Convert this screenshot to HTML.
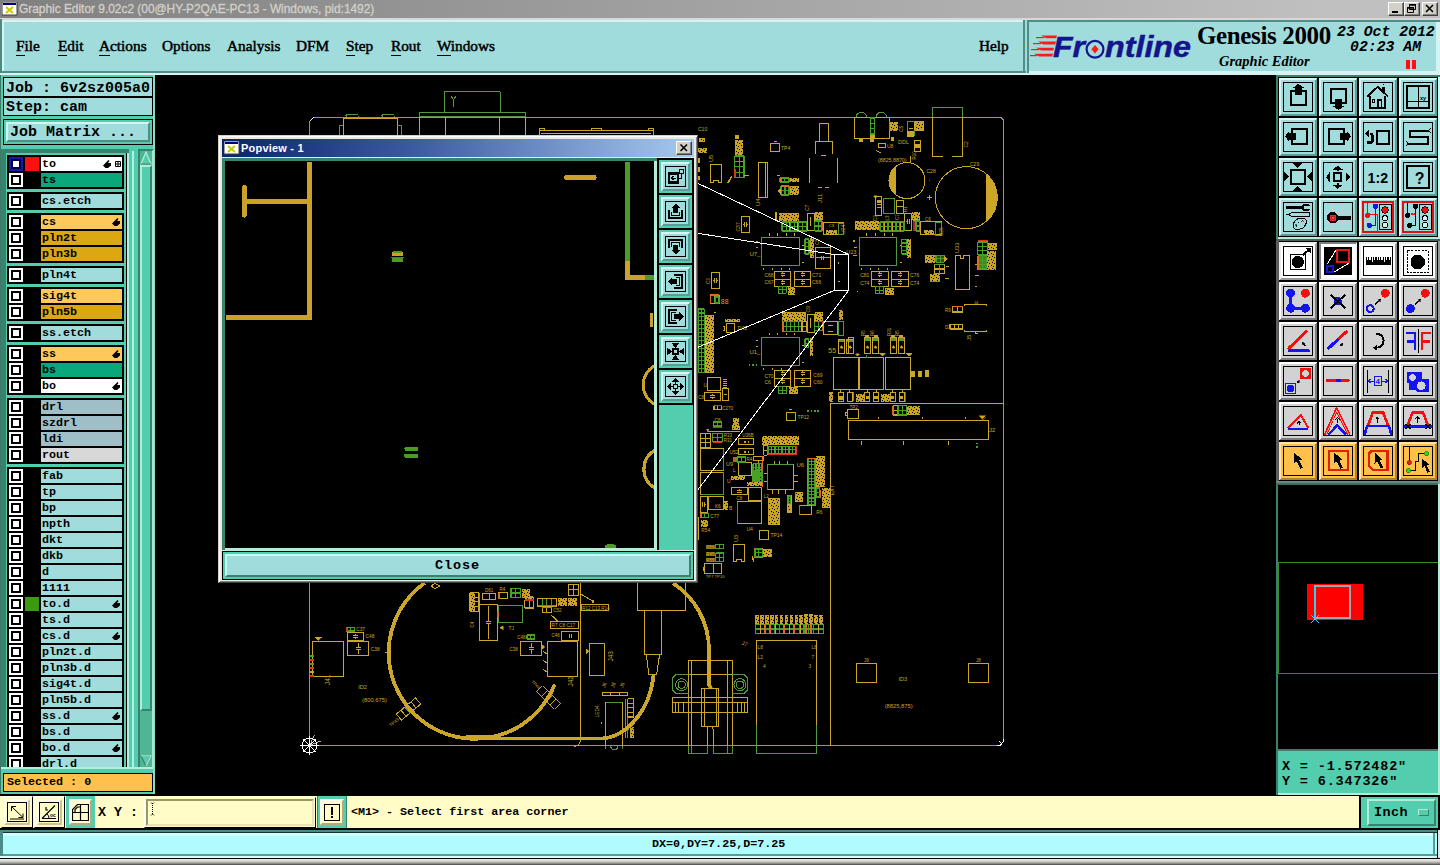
<!DOCTYPE html><html><head><meta charset="utf-8"><title>Graphic Editor</title><style>
*{margin:0;padding:0;box-sizing:border-box}
html,body{width:1440px;height:865px;overflow:hidden;background:#000}
body{position:relative;font-family:"Liberation Mono",monospace;color:#000}
.a{position:absolute}
.mono{font-family:"Liberation Mono",monospace;font-weight:bold;white-space:pre}
.serif{font-family:"Liberation Serif",serif}
.sans{font-family:"Liberation Sans",sans-serif}
#title{left:0;top:0;width:1440px;height:18px;background:linear-gradient(90deg,#808080 0%,#c0c0c0 92%,#c0c0c0 100%)}
#title .t{left:19px;top:2px;font:11.9px "Liberation Sans",sans-serif;color:#d4d0c8;white-space:pre;-webkit-text-stroke:0.3px #d4d0c8}
.wb{position:absolute;top:2px;width:16px;height:14px;background:#d4d0c8;border:1px solid;border-color:#fff #404040 #404040 #fff;box-shadow:inset -1px -1px 0 #808080}
#menu{left:0;top:18px;width:1027px;height:57px;background:#a0dcdc}
.mi{position:absolute;top:37px;font:15.3px "Liberation Serif",serif;-webkit-text-stroke:0.5px #000;white-space:pre}
.mi u{text-decoration:none;border-bottom:1.5px solid #000;padding-bottom:1px}
.lay{position:absolute;left:41px;width:81px;height:14px;font:bold 11.7px/14px "Liberation Mono",monospace;padding-left:1px;white-space:pre;overflow:hidden}
.cb{position:absolute;left:9px;width:14px;height:14px;background:#fff}
.cb:before{content:"";position:absolute;left:2px;top:2px;width:6px;height:6px;border:2px solid #000;background:#fff}
.cb.bl{background:#1818a8}.cb.bl:before{border-color:#000050}
.grp{position:absolute;left:7px;width:117px;background:#000}
</style></head><body><div id="title" class="a"><svg class="a" style="left:2px;top:2px" width="16" height="14" viewBox="0 0 16 14"><rect x="0" y="0" width="15" height="13" fill="#fff" stroke="#404040" stroke-width="1"/><rect x="1" y="1" width="13" height="2" fill="#000080"/><path d="M4 5 L11 11 M11 5 L4 11" stroke="#c8c800" stroke-width="2"/></svg><div class="a t">Graphic Editor 9.02c2 (00@HY-P2QAE-PC13 - Windows, pid:1492)</div><div class="wb" style="left:1388px"><svg width="14" height="12" style="position:absolute;left:0;top:0"><rect x="3" y="8" width="6" height="2" fill="#000"/></svg></div><div class="wb" style="left:1404px"><svg width="14" height="12" style="position:absolute;left:0;top:0"><path d="M4.5 1.5h6v5h-6z M2.5 4.5h6v5h-6z" fill="#d4d0c8" stroke="#000"/><path d="M4 2h7M2 5h7" stroke="#000" stroke-width="1.6"/></svg></div><div class="wb" style="left:1422px"><svg width="14" height="12" style="position:absolute;left:0;top:0"><path d="M3 2l7 7M10 2l-7 7" stroke="#000" stroke-width="1.6"/></svg></div></div><div id="menu" class="a"><div class="a" style="left:0;top:0;width:1027px;height:2px;background:#d8d8d8"></div><div class="a" style="left:0;top:1px;width:2px;height:56px;background:#4a8a80"></div><div class="a" style="left:2px;top:2px;width:1023px;height:2px;background:#d4f4f4"></div><div class="a" style="left:2px;top:2px;width:2px;height:53px;background:#d4f4f4"></div><div class="a" style="left:2px;top:53px;width:1024px;height:2px;background:#4f8f88"></div><div class="a" style="left:1023px;top:2px;width:2px;height:53px;background:#4f8f88"></div><div class="a" style="left:0;top:55px;width:1027px;height:2px;background:#d4f4f4"></div></div><div class="mi" style="left:16px"><u>F</u>ile</div><div class="mi" style="left:58px"><u>E</u>dit</div><div class="mi" style="left:99px"><u>A</u>ctions</div><div class="mi" style="left:162px">Options</div><div class="mi" style="left:227px">Analysis</div><div class="mi" style="left:296px">DFM</div><div class="mi" style="left:346px"><u>S</u>tep</div><div class="mi" style="left:391px"><u>R</u>out</div><div class="mi" style="left:437px"><u>W</u>indows</div><div class="mi" style="left:979px">Help</div><div class="a" style="left:1027px;top:18px;width:413px;height:57px;background:#a0dcdc"><div class="a" style="left:0;top:0;width:413px;height:2px;background:#d8d8d8"></div><div class="a" style="left:0;top:2px;width:413px;height:2px;background:#4f8f88"></div><div class="a" style="left:0;top:2px;width:2px;height:53px;background:#4f8f88"></div><div class="a" style="left:409px;top:4px;width:4px;height:51px;background:#d4f4f4"></div><div class="a" style="left:2px;top:53px;width:409px;height:2px;background:#d4f4f4"></div><div class="a" style="left:0;top:55px;width:413px;height:2px;background:#d4f4f4"></div></div><svg class="a" style="left:1030px;top:26px" width="165" height="40" viewBox="1030 26 165 40"><g fill="#ff1a1a"><path d="M1041 35.500h16l-0.800 2.800h-10z"/><path d="M1038 41.600h18l-0.800 2.800h-12z"/><path d="M1036 47.700h18l-0.800 2.800h-12z"/><path d="M1034 53.800h19l-0.800 2.800h-13z"/><rect x="1036" y="37" width="8" height="1.2"/><rect x="1033" y="43" width="8" height="1.2"/><rect x="1031" y="49" width="8" height="1.2"/><rect x="1030" y="55" width="7" height="1.2"/></g><text x="1053" y="56.5" font-family="Liberation Sans, sans-serif" font-weight="bold" font-style="italic" font-size="30" fill="#14148c" stroke="#14148c" stroke-width="0.500" textLength="32" lengthAdjust="spacingAndGlyphs">Fr</text><circle cx="1095" cy="49.300" r="8.400" fill="none" stroke="#14148c" stroke-width="2.200"/><path d="M1095 45l3.600 4.300l-3.600 4.300l-3.600 -4.300z" fill="#ff1a1a"/><text x="1105" y="56.500" font-family="Liberation Sans, sans-serif" font-weight="bold" font-style="italic" font-size="30" fill="#14148c" stroke="#14148c" stroke-width="0.500" textLength="86" lengthAdjust="spacingAndGlyphs">ntline</text></svg><div class="a serif" style="left:1197px;top:22px;font-weight:bold;font-size:25px;line-height:28px;white-space:pre;letter-spacing:-0.360px" id="gen2000">Genesis 2000</div><div class="a serif" style="left:1219px;top:53px;font-weight:bold;font-style:italic;font-size:14.500px;line-height:17px;white-space:pre" id="ged">Graphic Editor</div><div class="a mono" style="left:1337px;top:23.500px;font-style:italic;font-size:14.800px;line-height:17px" id="date1">23 Oct 2012</div><div class="a mono" style="left:1350px;top:38.500px;font-style:italic;font-size:14.800px;line-height:17px" id="date2">02:23 AM</div><div class="a" style="left:1406px;top:60px;width:4px;height:9px;background:#ff1010"></div><div class="a" style="left:1412px;top:60px;width:4px;height:9px;background:#ff1010"></div><div class="a" style="left:0;top:75px;width:155px;height:719px;background:#52ceae"></div><div class="a" style="left:153px;top:75px;width:2px;height:719px;background:#8adcc6"></div><div class="a" style="left:0;top:75px;width:1px;height:719px;background:#3c7a68"></div><div class="a mono" style="left:3px;top:77px;width:150px;height:20px;background:#a0dcdc;border:1px solid #000;font-size:15px;line-height:21px;padding-left:2px;overflow:hidden" id="job">Job : 6v2sz005a0</div><div class="a mono" style="left:3px;top:97px;width:150px;height:19px;background:#a0dcdc;border:1px solid #000;font-size:15px;line-height:19px;padding-left:2px;overflow:hidden">Step: cam</div><div class="a" style="left:3px;top:119px;width:150px;height:26px;border:1px solid #000;background:#52ceae"></div><div class="a mono" style="left:6px;top:122px;width:144px;height:20px;background:#a0dcdc;border:2px solid;border-color:#d4f4f4 #4f8f88 #4f8f88 #d4f4f4;font-size:15px;line-height:18px;padding-left:2px;overflow:hidden">Job Matrix ...</div><div class="a" style="left:1px;top:149px;width:133px;height:618px;overflow:hidden;background:#52ceae"><div class="a" style="left:0;top:0;width:5px;height:619px;background:#3a8270"></div><div class="a" style="left:0;top:0;width:128px;height:4px;background:#3a8270"></div><div class="a" style="left:125px;top:4px;width:1px;height:615px;background:#000"></div><div class="a" style="left:126px;top:4px;width:2px;height:615px;background:#b0f0e0"></div><div class="a" style="left:131px;top:2px;width:2px;height:617px;background:#b0f0e0"></div><div class="grp" style="left:6px;top:6px;height:34px"><div class="cb bl" style="left:2px;top:2px"></div><div class="a" style="left:18px;top:2px;width:14px;height:14px;background:#ff1010"></div><div class="lay" style="left:34px;top:2px;background:#ffffff">to<svg style="position:absolute;right:11px;top:3px" width="8" height="8" viewBox="0 0 8 8"><path d="M0 5.500L3 2.500L5.500 0L6.500 1L5 3H8V5.500L5 8H2.500z" fill="#000"/></svg><svg style="position:absolute;right:1px;top:4px" width="6" height="6" viewBox="0 0 6 6"><path d="M0.500 0.500h5v5h-5zM3 0v6M0 3h6" fill="#fff" stroke="#000" stroke-width="1"/></svg></div><div class="cb" style="left:2px;top:18px"></div><div class="lay" style="left:34px;top:18px;background:#0aa67c">ts</div></div><div class="grp" style="left:6px;top:43px;height:18px"><div class="cb" style="left:2px;top:2px"></div><div class="lay" style="left:34px;top:2px;background:#a0dcdc">cs.etch</div></div><div class="grp" style="left:6px;top:64px;height:50px"><div class="cb" style="left:2px;top:2px"></div><div class="lay" style="left:34px;top:2px;background:#ffc85a">cs<svg style="position:absolute;right:2px;top:3px" width="8" height="8" viewBox="0 0 8 8"><path d="M0 5.500L3 2.500L5.500 0L6.500 1L5 3H8V5.500L5 8H2.500z" fill="#000"/></svg></div><div class="cb" style="left:2px;top:18px"></div><div class="lay" style="left:34px;top:18px;background:#dba712">pln2t</div><div class="cb" style="left:2px;top:34px"></div><div class="lay" style="left:34px;top:34px;background:#dba712">pln3b</div></div><div class="grp" style="left:6px;top:117px;height:18px"><div class="cb" style="left:2px;top:2px"></div><div class="lay" style="left:34px;top:2px;background:#a0dcdc">pln4t</div></div><div class="grp" style="left:6px;top:138px;height:34px"><div class="cb" style="left:2px;top:2px"></div><div class="lay" style="left:34px;top:2px;background:#ffc85a">sig4t</div><div class="cb" style="left:2px;top:18px"></div><div class="lay" style="left:34px;top:18px;background:#dba712">pln5b</div></div><div class="grp" style="left:6px;top:175px;height:18px"><div class="cb" style="left:2px;top:2px"></div><div class="lay" style="left:34px;top:2px;background:#a0dcdc">ss.etch</div></div><div class="grp" style="left:6px;top:196px;height:50px"><div class="cb" style="left:2px;top:2px"></div><div class="lay" style="left:34px;top:2px;background:#ffc85a">ss<svg style="position:absolute;right:2px;top:3px" width="8" height="8" viewBox="0 0 8 8"><path d="M0 5.500L3 2.500L5.500 0L6.500 1L5 3H8V5.500L5 8H2.500z" fill="#000"/></svg></div><div class="cb" style="left:2px;top:18px"></div><div class="lay" style="left:34px;top:18px;background:#0aa67c">bs</div><div class="cb" style="left:2px;top:34px"></div><div class="lay" style="left:34px;top:34px;background:#ffffff">bo<svg style="position:absolute;right:2px;top:3px" width="8" height="8" viewBox="0 0 8 8"><path d="M0 5.500L3 2.500L5.500 0L6.500 1L5 3H8V5.500L5 8H2.500z" fill="#000"/></svg></div></div><div class="grp" style="left:6px;top:249px;height:66px"><div class="cb" style="left:2px;top:2px"></div><div class="lay" style="left:34px;top:2px;background:#9fbec8">drl</div><div class="cb" style="left:2px;top:18px"></div><div class="lay" style="left:34px;top:18px;background:#9fbec8">szdrl</div><div class="cb" style="left:2px;top:34px"></div><div class="lay" style="left:34px;top:34px;background:#9fbec8">ldi</div><div class="cb" style="left:2px;top:50px"></div><div class="lay" style="left:34px;top:50px;background:#d8d8d8">rout</div></div><div class="grp" style="left:6px;top:318px;height:322px"><div class="cb" style="left:2px;top:2px"></div><div class="lay" style="left:34px;top:2px;background:#a0dcdc">fab</div><div class="cb" style="left:2px;top:18px"></div><div class="lay" style="left:34px;top:18px;background:#a0dcdc">tp</div><div class="cb" style="left:2px;top:34px"></div><div class="lay" style="left:34px;top:34px;background:#a0dcdc">bp</div><div class="cb" style="left:2px;top:50px"></div><div class="lay" style="left:34px;top:50px;background:#a0dcdc">npth</div><div class="cb" style="left:2px;top:66px"></div><div class="lay" style="left:34px;top:66px;background:#a0dcdc">dkt</div><div class="cb" style="left:2px;top:82px"></div><div class="lay" style="left:34px;top:82px;background:#a0dcdc">dkb</div><div class="cb" style="left:2px;top:98px"></div><div class="lay" style="left:34px;top:98px;background:#a0dcdc">d</div><div class="cb" style="left:2px;top:114px"></div><div class="lay" style="left:34px;top:114px;background:#a0dcdc">1111</div><div class="cb" style="left:2px;top:130px"></div><div class="a" style="left:18px;top:130px;width:14px;height:14px;background:#3c9a10"></div><div class="lay" style="left:34px;top:130px;background:#a0dcdc">to.d<svg style="position:absolute;right:2px;top:3px" width="8" height="8" viewBox="0 0 8 8"><path d="M0 5.500L3 2.500L5.500 0L6.500 1L5 3H8V5.500L5 8H2.500z" fill="#000"/></svg></div><div class="cb" style="left:2px;top:146px"></div><div class="lay" style="left:34px;top:146px;background:#a0dcdc">ts.d</div><div class="cb" style="left:2px;top:162px"></div><div class="lay" style="left:34px;top:162px;background:#a0dcdc">cs.d<svg style="position:absolute;right:2px;top:3px" width="8" height="8" viewBox="0 0 8 8"><path d="M0 5.500L3 2.500L5.500 0L6.500 1L5 3H8V5.500L5 8H2.500z" fill="#000"/></svg></div><div class="cb" style="left:2px;top:178px"></div><div class="lay" style="left:34px;top:178px;background:#a0dcdc">pln2t.d</div><div class="cb" style="left:2px;top:194px"></div><div class="lay" style="left:34px;top:194px;background:#a0dcdc">pln3b.d</div><div class="cb" style="left:2px;top:210px"></div><div class="lay" style="left:34px;top:210px;background:#a0dcdc">sig4t.d</div><div class="cb" style="left:2px;top:226px"></div><div class="lay" style="left:34px;top:226px;background:#a0dcdc">pln5b.d</div><div class="cb" style="left:2px;top:242px"></div><div class="lay" style="left:34px;top:242px;background:#a0dcdc">ss.d<svg style="position:absolute;right:2px;top:3px" width="8" height="8" viewBox="0 0 8 8"><path d="M0 5.500L3 2.500L5.500 0L6.500 1L5 3H8V5.500L5 8H2.500z" fill="#000"/></svg></div><div class="cb" style="left:2px;top:258px"></div><div class="lay" style="left:34px;top:258px;background:#a0dcdc">bs.d</div><div class="cb" style="left:2px;top:274px"></div><div class="lay" style="left:34px;top:274px;background:#a0dcdc">bo.d<svg style="position:absolute;right:2px;top:3px" width="8" height="8" viewBox="0 0 8 8"><path d="M0 5.500L3 2.500L5.500 0L6.500 1L5 3H8V5.500L5 8H2.500z" fill="#000"/></svg></div><div class="cb" style="left:2px;top:290px"></div><div class="lay" style="left:34px;top:290px;background:#a0dcdc">drl.d</div><div class="cb" style="left:2px;top:306px"></div><div class="lay" style="left:34px;top:306px;background:#a0dcdc">x</div></div></div><div class="a" style="left:138px;top:149px;width:16px;height:619px;background:#4fb595;border-left:2px solid #3a8270;border-top:2px solid #3a8270;border-right:2px solid #a8e6d2"></div><svg class="a" style="left:140px;top:151px" width="12" height="14" viewBox="0 0 12 14"><path d="M6 1L11 13H1z" fill="#52ceae" stroke="#b4ecd8" stroke-width="1.200"/><path d="M1 13H11" stroke="#3a8270" stroke-width="1.200"/></svg><div class="a" style="left:140px;top:165px;width:12px;height:546px;background:#52ceae;border:2px solid;border-color:#b4ecd8 #3a8270 #3a8270 #b4ecd8"></div><svg class="a" style="left:140px;top:755px" width="12" height="12" viewBox="0 0 12 14" preserveAspectRatio="none"><path d="M6 13L11 1H1z" fill="#52ceae" stroke="#3a8270" stroke-width="1.200"/><path d="M1 1H11L6 13" stroke="#b4ecd8" stroke-width="1.200" fill="none"/></svg><div class="a" style="left:1px;top:767px;width:152px;height:2px;background:#b0f0e0"></div><div class="a mono" style="left:3px;top:773px;width:150px;height:19px;background:#ffc04c;border:1px solid #000;font-size:11.700px;line-height:17px;padding-left:3px">Selected : 0</div><div class="a" style="left:1276px;top:75px;width:164px;height:722px;background:#52ceae"></div><div class="a" style="left:1276px;top:75px;width:164px;height:2px;background:#3a8270"></div><div class="a" style="left:1276px;top:75px;width:2px;height:722px;background:#3a8270"></div><div class="a" style="left:1278px;top:77px;width:160px;height:160px;background:#000"></div><div class="a" style="left:1438px;top:77px;width:2px;height:162px;background:#c8f8f0"></div><div class="a" style="left:1278px;top:237px;width:162px;height:2px;background:#b4ecd8"></div><div class="a" style="left:1276px;top:239px;width:164px;height:2px;background:#4c5c58"></div><div class="a" style="left:1276px;top:241px;width:2px;height:240px;background:#606060"></div><div class="a" style="left:1278px;top:241px;width:160px;height:240px;background:#000"></div><div class="a" style="left:1278px;top:241px;width:1px;height:240px;background:#555"></div><div class="a" style="left:1276px;top:481px;width:164px;height:2px;background:#708884"></div><div class="a" style="left:1276px;top:483px;width:164px;height:2px;background:#3c6c60"></div><div class="a" style="left:1438px;top:241px;width:2px;height:243px;background:#8c9c98"></div><svg class="a" style="left:1279px;top:78px" width="38" height="38" viewBox="0 0 38 38" shape-rendering="crispEdges"><rect width="38" height="38" fill="#a0dcdc"/><path d="M0 0H38L36 2H2V36L0 38z" fill="#d8f6f6"/><path d="M38 38H0L2 36H36V2L38 0z" fill="#5c9c98"/><rect x="4.500" y="4.500" width="29" height="29" fill="none" stroke="#000" stroke-width="1"/><svg x="5" y="5" width="28" height="28" viewBox="0 0 28 28" overflow="hidden"><rect x="7" y="8.4" width="15" height="13.4" fill="none" stroke="#000" stroke-width="2"/><path d="M14.500 0.800L20.200 4.800H17.800V11.600H11.200V4.800H8.800z" fill="#000"/></svg></svg><svg class="a" style="left:1319px;top:78px" width="38" height="38" viewBox="0 0 38 38" shape-rendering="crispEdges"><rect width="38" height="38" fill="#a0dcdc"/><path d="M0 0H38L36 2H2V36L0 38z" fill="#d8f6f6"/><path d="M38 38H0L2 36H36V2L38 0z" fill="#5c9c98"/><rect x="4.500" y="4.500" width="29" height="29" fill="none" stroke="#000" stroke-width="1"/><svg x="5" y="5" width="28" height="28" viewBox="0 0 28 28" overflow="hidden"><rect x="7" y="6.200" width="15" height="13.800" fill="none" stroke="#000" stroke-width="2"/><path d="M14.500 27.200L20.200 23.200H17.800V16H11.200V23.200H8.800z" fill="#000"/></svg></svg><svg class="a" style="left:1359px;top:78px" width="38" height="38" viewBox="0 0 38 38" shape-rendering="crispEdges"><rect width="38" height="38" fill="#a0dcdc"/><path d="M0 0H38L36 2H2V36L0 38z" fill="#d8f6f6"/><path d="M38 38H0L2 36H36V2L38 0z" fill="#5c9c98"/><rect x="4.500" y="4.500" width="29" height="29" fill="none" stroke="#000" stroke-width="1"/><svg x="5" y="5" width="28" height="28" viewBox="0 0 28 28" overflow="hidden"><path d="M3.400 13.600L13.600 3.600L23.800 13.600" fill="none" stroke="#000" stroke-width="1.600"/><path d="M6.100 13.400V24.600H21V13.400" fill="none" stroke="#000" stroke-width="2"/><rect x="18.300" y="3.700" width="2.400" height="6.500" fill="#000"/><rect x="19.300" y="1.200" width="1" height="1.200" fill="#000"/><rect x="8.600" y="16.800" width="2.200" height="2.200" fill="none" stroke="#000" stroke-width="1"/><path d="M14 24.600V17H17.400V24.600" fill="none" stroke="#000" stroke-width="1.200"/></svg></svg><svg class="a" style="left:1399px;top:78px" width="38" height="38" viewBox="0 0 38 38" shape-rendering="crispEdges"><rect width="38" height="38" fill="#a0dcdc"/><path d="M0 0H38L36 2H2V36L0 38z" fill="#d8f6f6"/><path d="M38 38H0L2 36H36V2L38 0z" fill="#5c9c98"/><rect x="4.500" y="4.500" width="29" height="29" fill="none" stroke="#000" stroke-width="1"/><svg x="5" y="5" width="28" height="28" viewBox="0 0 28 28" overflow="hidden"><rect x="3.200" y="3.400" width="21.800" height="21.200" fill="none" stroke="#000" stroke-width="2"/><path d="M14.200 3.400V24.600M3.200 18.300H25" stroke="#000" stroke-width="1.400"/><text x="16" y="16.800" font-family="Liberation Sans,sans-serif" font-size="5.500" font-weight="bold" fill="#000">xy</text></svg></svg><svg class="a" style="left:1279px;top:118px" width="38" height="38" viewBox="0 0 38 38" shape-rendering="crispEdges"><rect width="38" height="38" fill="#a0dcdc"/><path d="M0 0H38L36 2H2V36L0 38z" fill="#d8f6f6"/><path d="M38 38H0L2 36H36V2L38 0z" fill="#5c9c98"/><rect x="4.500" y="4.500" width="29" height="29" fill="none" stroke="#000" stroke-width="1"/><svg x="5" y="5" width="28" height="28" viewBox="0 0 28 28" overflow="hidden"><rect x="8.100" y="6.400" width="14.700" height="14.200" fill="none" stroke="#000" stroke-width="2"/><path d="M1 13.400L5 7.900V10H12V16.800H5V18.900z" fill="#000"/></svg></svg><svg class="a" style="left:1319px;top:118px" width="38" height="38" viewBox="0 0 38 38" shape-rendering="crispEdges"><rect width="38" height="38" fill="#a0dcdc"/><path d="M0 0H38L36 2H2V36L0 38z" fill="#d8f6f6"/><path d="M38 38H0L2 36H36V2L38 0z" fill="#5c9c98"/><rect x="4.500" y="4.500" width="29" height="29" fill="none" stroke="#000" stroke-width="1"/><svg x="5" y="5" width="28" height="28" viewBox="0 0 28 28" overflow="hidden"><rect x="5.200" y="6.400" width="14.700" height="14.200" fill="none" stroke="#000" stroke-width="2"/><path d="M27 13.400L23 7.900V10H16V16.800H23V18.900z" fill="#000"/></svg></svg><svg class="a" style="left:1359px;top:118px" width="38" height="38" viewBox="0 0 38 38" shape-rendering="crispEdges"><rect width="38" height="38" fill="#a0dcdc"/><path d="M0 0H38L36 2H2V36L0 38z" fill="#d8f6f6"/><path d="M38 38H0L2 36H36V2L38 0z" fill="#5c9c98"/><rect x="4.500" y="4.500" width="29" height="29" fill="none" stroke="#000" stroke-width="1"/><svg x="5" y="5" width="28" height="28" viewBox="0 0 28 28" overflow="hidden"><rect x="13.400" y="8.200" width="11.800" height="12.600" fill="none" stroke="#000" stroke-width="2"/><path d="M3.400 19.600H6.500Q8.600 19.600 8.600 17V13.500Q8.600 10.800 5.500 10.800" fill="none" stroke="#000" stroke-width="2.400"/><path d="M1 10.800L5 7V14.600z" fill="#000"/></svg></svg><svg class="a" style="left:1399px;top:118px" width="38" height="38" viewBox="0 0 38 38" shape-rendering="crispEdges"><rect width="38" height="38" fill="#a0dcdc"/><path d="M0 0H38L36 2H2V36L0 38z" fill="#d8f6f6"/><path d="M38 38H0L2 36H36V2L38 0z" fill="#5c9c98"/><rect x="4.500" y="4.500" width="29" height="29" fill="none" stroke="#000" stroke-width="1"/><svg x="5" y="5" width="28" height="28" viewBox="0 0 28 28" overflow="hidden"><path d="M24.500 7.700H5.700V14.100H23.600V20.600H4.200" fill="none" stroke="#000" stroke-width="2"/><path d="M27 4.700L24.500 7.700L27 9.800M2.200 18L4.200 20.600L2.200 23" fill="none" stroke="#000" stroke-width="1"/></svg></svg><svg class="a" style="left:1279px;top:158px" width="38" height="38" viewBox="0 0 38 38" shape-rendering="crispEdges"><rect width="38" height="38" fill="#a0dcdc"/><path d="M0 0H38L36 2H2V36L0 38z" fill="#d8f6f6"/><path d="M38 38H0L2 36H36V2L38 0z" fill="#5c9c98"/><rect x="4.500" y="4.500" width="29" height="29" fill="none" stroke="#000" stroke-width="1"/><svg x="5" y="5" width="28" height="28" viewBox="0 0 28 28" overflow="hidden"><rect x="7.100" y="7.200" width="13.800" height="13.800" fill="none" stroke="#000" stroke-width="2"/><path d="M13.500 4.800L8 0H19zM13.500 23.200L8 28H19zM4.800 13.600L0 8.200V19zM23.400 13.600L28 8.200V19z" fill="#000"/></svg></svg><svg class="a" style="left:1319px;top:158px" width="38" height="38" viewBox="0 0 38 38" shape-rendering="crispEdges"><rect width="38" height="38" fill="#a0dcdc"/><path d="M0 0H38L36 2H2V36L0 38z" fill="#d8f6f6"/><path d="M38 38H0L2 36H36V2L38 0z" fill="#5c9c98"/><rect x="4.500" y="4.500" width="29" height="29" fill="none" stroke="#000" stroke-width="1"/><svg x="5" y="5" width="28" height="28" viewBox="0 0 28 28" overflow="hidden"><rect x="10" y="10.400" width="7.400" height="7.400" fill="none" stroke="#000" stroke-width="2"/><path d="M13.700 2.800L19 6.800H8.400zM13.700 25.800L19 21.800H8.400zM2.200 14.100L5.800 9V19.400zM26 14.100L21.800 9V19.400z" fill="#000"/><path d="M12.500 6.800h2.400v1.400h-2.400zM12.500 20.400h2.400v1.400h-2.400z" fill="#000"/></svg></svg><svg class="a" style="left:1359px;top:158px" width="38" height="38" viewBox="0 0 38 38" shape-rendering="crispEdges"><rect width="38" height="38" fill="#a0dcdc"/><path d="M0 0H38L36 2H2V36L0 38z" fill="#d8f6f6"/><path d="M38 38H0L2 36H36V2L38 0z" fill="#5c9c98"/><rect x="4.500" y="4.500" width="29" height="29" fill="none" stroke="#000" stroke-width="1"/><svg x="5" y="5" width="28" height="28" viewBox="0 0 28 28" overflow="hidden"><text x="3.600" y="19.800" font-family="Liberation Sans,sans-serif" font-size="15.500" font-weight="bold" fill="#000" textLength="20.500" lengthAdjust="spacingAndGlyphs">1:2</text></svg></svg><svg class="a" style="left:1399px;top:158px" width="38" height="38" viewBox="0 0 38 38" shape-rendering="crispEdges"><rect width="38" height="38" fill="#a0dcdc"/><path d="M0 0H38L36 2H2V36L0 38z" fill="#d8f6f6"/><path d="M38 38H0L2 36H36V2L38 0z" fill="#5c9c98"/><rect x="4.500" y="4.500" width="29" height="29" fill="none" stroke="#000" stroke-width="1"/><svg x="5" y="5" width="28" height="28" viewBox="0 0 28 28" overflow="hidden"><rect x="3.200" y="3.400" width="21.800" height="21.200" fill="none" stroke="#000" stroke-width="2"/><text x="10.800" y="20.800" font-family="Liberation Sans,sans-serif" font-size="16" font-weight="bold" fill="#000">?</text></svg></svg><svg class="a" style="left:1279px;top:198px" width="38" height="38" viewBox="0 0 38 38" shape-rendering="crispEdges"><rect width="38" height="38" fill="#a0dcdc"/><path d="M0 0H38L36 2H2V36L0 38z" fill="#d8f6f6"/><path d="M38 38H0L2 36H36V2L38 0z" fill="#5c9c98"/><rect x="4.500" y="4.500" width="29" height="29" fill="none" stroke="#000" stroke-width="1"/><svg x="5" y="5" width="28" height="28" viewBox="0 0 28 28" overflow="hidden"><rect x="2.200" y="3.200" width="16" height="2.600" fill="#000"/><path d="M25.800 2.600L24.600 1.200H19.600L17.200 3V5.800L19.600 7.600H24.600L25.800 6.200V5.500H20.200V3.400H25.800z" fill="#000"/><path d="M2.200 11.500H4.500L7.500 9.600H25.700V13.400H7.500L4.500 11.500" fill="none" stroke="#000" stroke-width="1.100"/><path d="M13 16.200Q16 14.600 20 15.400Q23.200 16.600 22.400 19.600Q21.400 21.600 20.600 23.600Q19.200 25.800 16.400 25.600Q14.600 27.200 12 26.600Q9.200 25.400 9.400 21.400Q9.800 18 13 16.200z" fill="none" stroke="#000" stroke-width="1.100"/><rect x="13.900" y="18.800" width="1.400" height="1.400" fill="none" stroke="#000" stroke-width="0.600" transform="rotate(45 14.600 19.500)"/><rect x="17.900" y="17.700" width="1.400" height="1.400" fill="none" stroke="#000" stroke-width="0.600" transform="rotate(45 18.600 18.400)"/><path d="M11.600 21.400L12.800 22.200L12.400 23.600z" fill="#000" stroke="#000" stroke-width="0.500"/></svg></svg><svg class="a" style="left:1319px;top:198px" width="38" height="38" viewBox="0 0 38 38" shape-rendering="crispEdges"><rect width="38" height="38" fill="#a0dcdc"/><path d="M0 0H38L36 2H2V36L0 38z" fill="#d8f6f6"/><path d="M38 38H0L2 36H36V2L38 0z" fill="#5c9c98"/><rect x="4.500" y="4.500" width="29" height="29" fill="none" stroke="#000" stroke-width="1"/><svg x="5" y="5" width="28" height="28" viewBox="0 0 28 28" overflow="hidden"><path d="M8.300 0V28M18.500 0V28M0 9.600H28M0 19.500H28" stroke="#c4d0d8" stroke-width="1"/><path d="M6.600 9.400H11.200L14.400 12.600V13.100H26.900V16.600H14.400V17.200L11.200 20.400H6.600L3.400 17.200V12.600z" fill="#000"/><rect x="6" y="12" width="6.100" height="6.100" fill="#d83030"/><rect x="7.300" y="13.300" width="3.500" height="3.500" fill="#e85050" stroke="#a01818" stroke-width="0.800"/></svg></svg><svg class="a" style="left:1359px;top:198px" width="38" height="38" viewBox="0 0 38 38" shape-rendering="crispEdges"><rect width="38" height="38" fill="#a0dcdc"/><path d="M0 0H38L36 2H2V36L0 38z" fill="#d8f6f6"/><path d="M38 38H0L2 36H36V2L38 0z" fill="#5c9c98"/><rect x="4" y="4" width="30" height="30" fill="#a0dcdc" stroke="#e01010" stroke-width="2.400"/><svg x="5" y="5" width="28" height="28" viewBox="0 0 28 28" overflow="hidden"><path d="M3.400 0V12.600M3.400 11.600H13.400V28" stroke="#f01010" stroke-width="1" fill="none"/><circle cx="3.600" cy="12.400" r="2.600" fill="#f01010"/><path d="M11 3.200V22H5.400" stroke="#1414f0" stroke-width="1" fill="none"/><circle cx="11.400" cy="3.200" r="2.600" fill="#1414f0"/><circle cx="5.400" cy="22.400" r="2.600" fill="#1414f0"/><rect x="15.2" y="1.5" width="12" height="25" fill="#a0dcdc" stroke="#000" stroke-width="1"/><circle cx="21" cy="7" r="3.4" fill="#f01010" stroke="#000" stroke-width="0.8"/><circle cx="21" cy="15.2" r="2.6" fill="#d8f0f0" stroke="#000" stroke-width="1"/><circle cx="21" cy="22" r="2.6" fill="#d8f0f0" stroke="#000" stroke-width="1"/></svg></svg><svg class="a" style="left:1399px;top:198px" width="38" height="38" viewBox="0 0 38 38" shape-rendering="crispEdges"><rect width="38" height="38" fill="#a0dcdc"/><path d="M0 0H38L36 2H2V36L0 38z" fill="#d8f6f6"/><path d="M38 38H0L2 36H36V2L38 0z" fill="#5c9c98"/><rect x="4" y="4" width="30" height="30" fill="#a0dcdc" stroke="#e01010" stroke-width="2.400"/><svg x="5" y="5" width="28" height="28" viewBox="0 0 28 28" overflow="hidden"><path d="M3.700 0V12" stroke="#000" stroke-width="1" fill="none"/><circle cx="3.700" cy="12.400" r="2.600" fill="#000"/><path d="M11.400 3.200V22H5.700" stroke="#000" stroke-width="1" fill="none"/><circle cx="11.400" cy="3.200" r="2.600" fill="#000"/><circle cx="5.700" cy="22.400" r="2.600" fill="#000"/><path d="M6.500 11.800H10.800M7 9.600V12M8.600 9.600V12M10.200 9.600V12" stroke="#f01010" stroke-width="1"/><rect x="15.2" y="1.5" width="12" height="25" fill="#a0dcdc" stroke="#000" stroke-width="1"/><circle cx="21" cy="7" r="3.4" fill="#f01010" stroke="#000" stroke-width="0.8"/><circle cx="21" cy="15.2" r="2.6" fill="#d8f0f0" stroke="#000" stroke-width="1"/><circle cx="21" cy="22" r="2.6" fill="#d8f0f0" stroke="#000" stroke-width="1"/></svg></svg><svg class="a" style="left:1279px;top:242px" width="38" height="38" viewBox="0 0 38 38" shape-rendering="crispEdges"><rect width="38" height="38" fill="#ffffff"/><path d="M0 0H38L36 2H2V36L0 38z" fill="#ececec"/><path d="M38 38H0L2 36H36V2L38 0z" fill="#9a9a9a"/><rect x="4.500" y="4.500" width="29" height="29" fill="none" stroke="#000" stroke-width="1"/><svg x="5" y="5" width="28" height="28" viewBox="0 0 28 28" overflow="hidden"><rect x="6.600" y="7.600" width="15" height="15" fill="none" stroke="#000" stroke-width="1"/><circle cx="13.900" cy="15" r="6" fill="#000"/><path d="M18.800 8L25 2.800" stroke="#000" stroke-width="2"/><path d="M21.500 1H27.400V6.500z" fill="#000"/></svg></svg><svg class="a" style="left:1319px;top:242px" width="38" height="38" viewBox="0 0 38 38" shape-rendering="crispEdges"><rect width="38" height="38" fill="#ffffff"/><path d="M0 0H38L36 2H2V36L0 38z" fill="#808080"/><path d="M38 38H0L2 36H36V2L38 0z" fill="#f4f4f4"/><rect x="5" y="5" width="28" height="28" fill="#000"/><svg x="5" y="5" width="28" height="28" viewBox="0 0 28 28" overflow="hidden"><path d="M3.200 17.200L11.800 3.200M10 25.200L24.900 16.100" stroke="#fff" stroke-width="1"/><rect x="12.800" y="3.100" width="12" height="12" fill="#000" stroke="#e81818" stroke-width="2"/><rect x="3.100" y="19" width="6" height="6" fill="#000" stroke="#1818d8" stroke-width="2"/></svg></svg><svg class="a" style="left:1359px;top:242px" width="38" height="38" viewBox="0 0 38 38" shape-rendering="crispEdges"><rect width="38" height="38" fill="#ffffff"/><path d="M0 0H38L36 2H2V36L0 38z" fill="#ececec"/><path d="M38 38H0L2 36H36V2L38 0z" fill="#9a9a9a"/><rect x="4.500" y="4.500" width="29" height="29" fill="none" stroke="#000" stroke-width="1"/><svg x="5" y="5" width="28" height="28" viewBox="0 0 28 28" overflow="hidden"><rect x="2" y="9.600" width="24.800" height="8.200" fill="#000"/><rect x="2.90" y="9.500" width="1.200" height="3.4" fill="#fff"/><rect x="5.32" y="9.500" width="1.200" height="3.4" fill="#fff"/><rect x="7.74" y="9.500" width="1.200" height="5.5" fill="#fff"/><rect x="10.16" y="9.500" width="1.200" height="3.4" fill="#fff"/><rect x="12.58" y="9.500" width="1.200" height="3.4" fill="#fff"/><rect x="15.00" y="9.500" width="1.200" height="3.4" fill="#fff"/><rect x="17.42" y="9.500" width="1.200" height="3.4" fill="#fff"/><rect x="19.84" y="9.500" width="1.200" height="5.5" fill="#fff"/><rect x="22.26" y="9.500" width="1.200" height="3.4" fill="#fff"/><rect x="24.68" y="9.500" width="1.200" height="3.4" fill="#fff"/></svg></svg><svg class="a" style="left:1399px;top:242px" width="38" height="38" viewBox="0 0 38 38" shape-rendering="crispEdges"><rect width="38" height="38" fill="#ffffff"/><path d="M0 0H38L36 2H2V36L0 38z" fill="#ececec"/><path d="M38 38H0L2 36H36V2L38 0z" fill="#9a9a9a"/><rect x="4.500" y="4.500" width="29" height="29" fill="none" stroke="#000" stroke-width="1"/><svg x="5" y="5" width="28" height="28" viewBox="0 0 28 28" overflow="hidden"><rect x="3.500" y="3.600" width="21" height="22" fill="none" stroke="#000" stroke-width="1.300" stroke-dasharray="2.200 1.300"/><path d="M10.900 8H16.700L20.800 12.100V17.900L16.700 22H10.900L6.800 17.900V12.100z" fill="#000"/></svg></svg><svg class="a" style="left:1279px;top:282px" width="38" height="38" viewBox="0 0 38 38" shape-rendering="crispEdges"><rect width="38" height="38" fill="#d2d2d2"/><path d="M0 0H38L36 2H2V36L0 38z" fill="#ffffff"/><path d="M38 38H0L2 36H36V2L38 0z" fill="#7c7c7c"/><rect x="4.500" y="4.500" width="29" height="29" fill="none" stroke="#000" stroke-width="1"/><svg x="5" y="5" width="28" height="28" viewBox="0 0 28 28" overflow="hidden"><path d="M6.600 5.900V18Q6.600 21.300 10 21.300H21.400" fill="none" stroke="#1414f0" stroke-width="3.200"/><circle cx="6.600" cy="5.900" r="4.400" fill="#1414f0"/><circle cx="6.600" cy="21.300" r="4.400" fill="#1414f0"/><circle cx="21.400" cy="21.300" r="4.400" fill="#1414f0"/><circle cx="21.400" cy="6.300" r="4.400" fill="#f01010"/></svg></svg><svg class="a" style="left:1319px;top:282px" width="38" height="38" viewBox="0 0 38 38" shape-rendering="crispEdges"><rect width="38" height="38" fill="#d2d2d2"/><path d="M0 0H38L36 2H2V36L0 38z" fill="#ffffff"/><path d="M38 38H0L2 36H36V2L38 0z" fill="#7c7c7c"/><rect x="4.500" y="4.500" width="29" height="29" fill="none" stroke="#000" stroke-width="1"/><svg x="5" y="5" width="28" height="28" viewBox="0 0 28 28" overflow="hidden"><rect x="9.500" y="10.300" width="8" height="8" rx="2.500" fill="#1414c8"/><path d="M6.400 7.700L21.500 21.300M21.500 7.700L6.400 21.300" stroke="#000" stroke-width="1.800"/></svg></svg><svg class="a" style="left:1359px;top:282px" width="38" height="38" viewBox="0 0 38 38" shape-rendering="crispEdges"><rect width="38" height="38" fill="#d2d2d2"/><path d="M0 0H38L36 2H2V36L0 38z" fill="#ffffff"/><path d="M38 38H0L2 36H36V2L38 0z" fill="#7c7c7c"/><rect x="4.500" y="4.500" width="29" height="29" fill="none" stroke="#000" stroke-width="1"/><svg x="5" y="5" width="28" height="28" viewBox="0 0 28 28" overflow="hidden"><circle cx="21.300" cy="6.300" r="4.400" fill="#f01010"/><circle cx="6.300" cy="21.600" r="3.400" fill="none" stroke="#1414f0" stroke-width="2"/><path d="M11.1 17.3L16.8 12.2" stroke="#000" stroke-width="1"/><path d="M16.8 12.2L16.0 14.7L14.3 12.7z" fill="#000" stroke="#000" stroke-width="0.600"/></svg></svg><svg class="a" style="left:1399px;top:282px" width="38" height="38" viewBox="0 0 38 38" shape-rendering="crispEdges"><rect width="38" height="38" fill="#d2d2d2"/><path d="M0 0H38L36 2H2V36L0 38z" fill="#ffffff"/><path d="M38 38H0L2 36H36V2L38 0z" fill="#7c7c7c"/><rect x="4.500" y="4.500" width="29" height="29" fill="none" stroke="#000" stroke-width="1"/><svg x="5" y="5" width="28" height="28" viewBox="0 0 28 28" overflow="hidden"><circle cx="21.300" cy="6.300" r="4.400" fill="#f01010"/><circle cx="6.400" cy="21.600" r="4.400" fill="#1414f0"/><path d="M11.1 17.3L16.8 12.2" stroke="#000" stroke-width="1"/><path d="M16.8 12.2L16.0 14.7L14.3 12.7z" fill="#000" stroke="#000" stroke-width="0.600"/></svg></svg><svg class="a" style="left:1279px;top:322px" width="38" height="38" viewBox="0 0 38 38" shape-rendering="crispEdges"><rect width="38" height="38" fill="#d2d2d2"/><path d="M0 0H38L36 2H2V36L0 38z" fill="#ffffff"/><path d="M38 38H0L2 36H36V2L38 0z" fill="#7c7c7c"/><rect x="4.500" y="4.500" width="29" height="29" fill="none" stroke="#000" stroke-width="1"/><svg x="5" y="5" width="28" height="28" viewBox="0 0 28 28" overflow="hidden"><path d="M4.800 21.200L22.200 4.700" stroke="#f01010" stroke-width="3" stroke-linecap="round"/><path d="M5.700 23.700H24.500" stroke="#1414f0" stroke-width="3" stroke-linecap="round"/><path d="M21.6 18.9L18.2 15.5" stroke="#000" stroke-width="1"/><path d="M18.2 15.5L20.7 16.2L18.9 18.0z" fill="#000" stroke="#000" stroke-width="0.600"/></svg></svg><svg class="a" style="left:1319px;top:322px" width="38" height="38" viewBox="0 0 38 38" shape-rendering="crispEdges"><rect width="38" height="38" fill="#d2d2d2"/><path d="M0 0H38L36 2H2V36L0 38z" fill="#ffffff"/><path d="M38 38H0L2 36H36V2L38 0z" fill="#7c7c7c"/><rect x="4.500" y="4.500" width="29" height="29" fill="none" stroke="#000" stroke-width="1"/><svg x="5" y="5" width="28" height="28" viewBox="0 0 28 28" overflow="hidden"><path d="M13.500 12.900L22.400 4.700" stroke="#f01010" stroke-width="3" stroke-linecap="round"/><path d="M4.600 21.200L13.500 12.900" stroke="#1414f0" stroke-width="3" stroke-linecap="round"/><path d="M15.6 19.5L19 16.6" stroke="#000" stroke-width="1"/><path d="M19.0 16.6L18.1 19.1L16.4 17.1z" fill="#000" stroke="#000" stroke-width="0.600"/></svg></svg><svg class="a" style="left:1359px;top:322px" width="38" height="38" viewBox="0 0 38 38" shape-rendering="crispEdges"><rect width="38" height="38" fill="#d2d2d2"/><path d="M0 0H38L36 2H2V36L0 38z" fill="#ffffff"/><path d="M38 38H0L2 36H36V2L38 0z" fill="#7c7c7c"/><rect x="4.500" y="4.500" width="29" height="29" fill="none" stroke="#000" stroke-width="1"/><svg x="5" y="5" width="28" height="28" viewBox="0 0 28 28" overflow="hidden"><path d="M12.200 7Q19.600 7 19.600 13.800Q19.600 20.800 11 20.800" fill="none" stroke="#000" stroke-width="2"/><path d="M9 20.800L13.200 17.800V23.800z" fill="#000"/></svg></svg><svg class="a" style="left:1399px;top:322px" width="38" height="38" viewBox="0 0 38 38" shape-rendering="crispEdges"><rect width="38" height="38" fill="#d2d2d2"/><path d="M0 0H38L36 2H2V36L0 38z" fill="#ffffff"/><path d="M38 38H0L2 36H36V2L38 0z" fill="#7c7c7c"/><rect x="4.500" y="4.500" width="29" height="29" fill="none" stroke="#000" stroke-width="1"/><svg x="5" y="5" width="28" height="28" viewBox="0 0 28 28" overflow="hidden"><path d="M10.700 5.200V22.700M11.500 5.800H2.400M10.700 14.400H3" stroke="#1414f0" stroke-width="2.200" fill="none"/><path d="M14.400 1.800V25.700" stroke="#000" stroke-width="1"/><path d="M18.100 5.200V22.700M17.300 5.800H26.900M18.100 14.400H25.800" stroke="#f01010" stroke-width="2.200" fill="none"/></svg></svg><svg class="a" style="left:1279px;top:362px" width="38" height="38" viewBox="0 0 38 38" shape-rendering="crispEdges"><rect width="38" height="38" fill="#d2d2d2"/><path d="M0 0H38L36 2H2V36L0 38z" fill="#ffffff"/><path d="M38 38H0L2 36H36V2L38 0z" fill="#7c7c7c"/><rect x="4.500" y="4.500" width="29" height="29" fill="none" stroke="#000" stroke-width="1"/><svg x="5" y="5" width="28" height="28" viewBox="0 0 28 28" overflow="hidden"><rect x="15.900" y="1.100" width="10.800" height="10.500" fill="#f01010"/><circle cx="21.400" cy="6.500" r="3.400" fill="#d2d2d2"/><rect x="1.600" y="16.600" width="10" height="10" fill="none" stroke="#1414f0" stroke-width="1"/><circle cx="6.600" cy="21.500" r="3.600" fill="#1414f0"/><path d="M12.6 16.4L15.6 13.7" stroke="#000" stroke-width="1"/><path d="M15.6 13.7L14.8 16.2L13.1 14.2z" fill="#000" stroke="#000" stroke-width="0.600"/></svg></svg><svg class="a" style="left:1319px;top:362px" width="38" height="38" viewBox="0 0 38 38" shape-rendering="crispEdges"><rect width="38" height="38" fill="#d2d2d2"/><path d="M0 0H38L36 2H2V36L0 38z" fill="#ffffff"/><path d="M38 38H0L2 36H36V2L38 0z" fill="#7c7c7c"/><rect x="4.500" y="4.500" width="29" height="29" fill="none" stroke="#000" stroke-width="1"/><svg x="5" y="5" width="28" height="28" viewBox="0 0 28 28" overflow="hidden"><path d="M3.500 13.400H24.300" stroke="#f01010" stroke-width="3" stroke-linecap="round"/><path d="M11.800 13.400H16.900" stroke="#1414f0" stroke-width="3"/></svg></svg><svg class="a" style="left:1359px;top:362px" width="38" height="38" viewBox="0 0 38 38" shape-rendering="crispEdges"><rect width="38" height="38" fill="#d2d2d2"/><path d="M0 0H38L36 2H2V36L0 38z" fill="#ffffff"/><path d="M38 38H0L2 36H36V2L38 0z" fill="#7c7c7c"/><rect x="4.500" y="4.500" width="29" height="29" fill="none" stroke="#000" stroke-width="1"/><svg x="5" y="5" width="28" height="28" viewBox="0 0 28 28" overflow="hidden"><path d="M3.500 2.800V26.200M24.500 2.800V26.200" stroke="#000" stroke-width="1.200"/><rect x="10.200" y="9.100" width="7.700" height="9.700" fill="none" stroke="#1414f0" stroke-width="1"/><path d="M10.200 14.200H4.500M6.500 12.200L4.500 14.200L6.500 16.200M17.900 14.200H23.500M21.500 12.200L23.500 14.200L21.500 16.200" stroke="#1414f0" stroke-width="1" fill="none"/><text x="11.600" y="17.400" font-family="Liberation Sans,sans-serif" font-size="8" font-weight="bold" fill="#1414f0">4</text></svg></svg><svg class="a" style="left:1399px;top:362px" width="38" height="38" viewBox="0 0 38 38" shape-rendering="crispEdges"><rect width="38" height="38" fill="#d2d2d2"/><path d="M0 0H38L36 2H2V36L0 38z" fill="#ffffff"/><path d="M38 38H0L2 36H36V2L38 0z" fill="#7c7c7c"/><rect x="4.500" y="4.500" width="29" height="29" fill="none" stroke="#000" stroke-width="1"/><svg x="5" y="5" width="28" height="28" viewBox="0 0 28 28" overflow="hidden"><path d="M3 5.100H17.800V12H24.800V24.800H13L11 22.800H4.700V15.700H3z" fill="#1414f0"/><circle cx="8.500" cy="10.500" r="3.400" fill="#d2d2d2"/><circle cx="17.200" cy="18.800" r="4.400" fill="#d2d2d2"/></svg></svg><svg class="a" style="left:1279px;top:402px" width="38" height="38" viewBox="0 0 38 38" shape-rendering="crispEdges"><rect width="38" height="38" fill="#d2d2d2"/><path d="M0 0H38L36 2H2V36L0 38z" fill="#ffffff"/><path d="M38 38H0L2 36H36V2L38 0z" fill="#7c7c7c"/><rect x="4.500" y="4.500" width="29" height="29" fill="none" stroke="#000" stroke-width="1"/><svg x="5" y="5" width="28" height="28" viewBox="0 0 28 28" overflow="hidden"><path d="M3.600 21.500L16.800 7.900L24.500 21.500" fill="none" stroke="#f01010" stroke-width="2" stroke-linejoin="round"/><path d="M4 22H24.200" stroke="#1414f0" stroke-width="2.600"/><path d="M15.3 18V15.2M13.3 16.4L15.3 14.2L17.3 16.4" stroke="#000" stroke-width="1" fill="none"/></svg></svg><svg class="a" style="left:1319px;top:402px" width="38" height="38" viewBox="0 0 38 38" shape-rendering="crispEdges"><rect width="38" height="38" fill="#d2d2d2"/><path d="M0 0H38L36 2H2V36L0 38z" fill="#ffffff"/><path d="M38 38H0L2 36H36V2L38 0z" fill="#7c7c7c"/><rect x="4.500" y="4.500" width="29" height="29" fill="none" stroke="#000" stroke-width="1"/><svg x="5" y="5" width="28" height="28" viewBox="0 0 28 28" overflow="hidden"><path d="M1.400 28L12.600 2.500L25.400 28" fill="none" stroke="#f01010" stroke-width="3.200"/><path d="M1.400 28L12.600 2.500L25.400 28" fill="none" stroke="#e8c0c0" stroke-width="0.800"/><path d="M4.600 27.600L13.300 18.300L22 27.600" fill="none" stroke="#1414f0" stroke-width="2.600"/><path d="M13.5 15.6V11.6M11.5 12.8L13.5 10.6L15.5 12.8" stroke="#000" stroke-width="1" fill="none"/></svg></svg><svg class="a" style="left:1359px;top:402px" width="38" height="38" viewBox="0 0 38 38" shape-rendering="crispEdges"><rect width="38" height="38" fill="#d2d2d2"/><path d="M0 0H38L36 2H2V36L0 38z" fill="#ffffff"/><path d="M38 38H0L2 36H36V2L38 0z" fill="#7c7c7c"/><rect x="4.500" y="4.500" width="29" height="29" fill="none" stroke="#000" stroke-width="1"/><svg x="5" y="5" width="28" height="28" viewBox="0 0 28 28" overflow="hidden"><path d="M4.300 17.800L8.800 5.400H19.100L23.900 17.800" fill="none" stroke="#f01010" stroke-width="2.600"/><path d="M0.800 27.600L3 19H25L27.400 27.600" fill="none" stroke="#1414f0" stroke-width="2.600"/><path d="M13.4 15.6V11.2M11.4 12.399999999999999L13.4 10.2L15.4 12.399999999999999" stroke="#000" stroke-width="1" fill="none"/></svg></svg><svg class="a" style="left:1399px;top:402px" width="38" height="38" viewBox="0 0 38 38" shape-rendering="crispEdges"><rect width="38" height="38" fill="#d2d2d2"/><path d="M0 0H38L36 2H2V36L0 38z" fill="#ffffff"/><path d="M38 38H0L2 36H36V2L38 0z" fill="#7c7c7c"/><rect x="4.500" y="4.500" width="29" height="29" fill="none" stroke="#000" stroke-width="1"/><svg x="5" y="5" width="28" height="28" viewBox="0 0 28 28" overflow="hidden"><path d="M3.600 18.300L8.700 5.400H18.900L24 18.300" fill="none" stroke="#f01010" stroke-width="2.600"/><path d="M0 19.300H28" stroke="#1414f0" stroke-width="2.600"/><path d="M1.500 16.800L6.700 22.200M6.700 16.800L1.500 22.200M21.400 16.800L26.600 22.200M26.600 16.800L21.400 22.200" stroke="#000" stroke-width="1"/><path d="M13.2 15.6V10.6M11.2 11.8L13.2 9.6L15.2 11.8" stroke="#000" stroke-width="1" fill="none"/></svg></svg><svg class="a" style="left:1279px;top:442px" width="38" height="38" viewBox="0 0 38 38" shape-rendering="crispEdges"><rect width="38" height="38" fill="#ffc04c"/><path d="M0 0H38L36 2H2V36L0 38z" fill="#ffe6a8"/><path d="M38 38H0L2 36H36V2L38 0z" fill="#b08428"/><rect x="4.500" y="4.500" width="29" height="29" fill="none" stroke="#000" stroke-width="1"/><svg x="5" y="5" width="28" height="28" viewBox="0 0 28 28" overflow="hidden"><path d="M10.2 5.5 L10.2 16.5 L12.8 14.3 L16.4 21.9 L18.8 20.7 L15.4 13.5 L18.6 13.1z" fill="#000"/></svg></svg><svg class="a" style="left:1319px;top:442px" width="38" height="38" viewBox="0 0 38 38" shape-rendering="crispEdges"><rect width="38" height="38" fill="#ffc04c"/><path d="M0 0H38L36 2H2V36L0 38z" fill="#ffe6a8"/><path d="M38 38H0L2 36H36V2L38 0z" fill="#b08428"/><rect x="4.500" y="4.500" width="29" height="29" fill="none" stroke="#000" stroke-width="1"/><svg x="5" y="5" width="28" height="28" viewBox="0 0 28 28" overflow="hidden"><rect x="4.600" y="3.600" width="19" height="19.200" fill="none" stroke="#e02000" stroke-width="2.200"/><path d="M10.3 5.5 L10.3 16.5 L12.9 14.3 L16.5 21.9 L18.9 20.7 L15.5 13.5 L18.7 13.1z" fill="#000"/></svg></svg><svg class="a" style="left:1359px;top:442px" width="38" height="38" viewBox="0 0 38 38" shape-rendering="crispEdges"><rect width="38" height="38" fill="#ffc04c"/><path d="M0 0H38L36 2H2V36L0 38z" fill="#ffe6a8"/><path d="M38 38H0L2 36H36V2L38 0z" fill="#b08428"/><rect x="4.500" y="4.500" width="29" height="29" fill="none" stroke="#000" stroke-width="1"/><svg x="5" y="5" width="28" height="28" viewBox="0 0 28 28" overflow="hidden"><path d="M7.900 3.600H23.400V22.800H8.800L4.800 18.800V6.800z" fill="none" stroke="#e02000" stroke-width="2.200"/><path d="M10.5 5.5 L10.5 16.5 L13.1 14.3 L16.7 21.9 L19.1 20.7 L15.7 13.5 L18.9 13.1z" fill="#000"/></svg></svg><svg class="a" style="left:1399px;top:442px" width="38" height="38" viewBox="0 0 38 38" shape-rendering="crispEdges"><rect width="38" height="38" fill="#ffc04c"/><path d="M0 0H38L36 2H2V36L0 38z" fill="#ffe6a8"/><path d="M38 38H0L2 36H36V2L38 0z" fill="#b08428"/><rect x="4.500" y="4.500" width="29" height="29" fill="none" stroke="#000" stroke-width="1"/><svg x="5" y="5" width="28" height="28" viewBox="0 0 28 28" overflow="hidden"><path d="M5.300 0V14M4.400 23.600H11.200V14.200H14.400V6.600H22.600" fill="none" stroke="#000" stroke-width="1"/><circle cx="5.300" cy="15.600" r="2.200" fill="#e02010" stroke="#702000" stroke-width="0.600"/><circle cx="4.400" cy="23.600" r="2.300" fill="#20e020" stroke="#106010" stroke-width="0.600"/><circle cx="22.600" cy="6.600" r="2.300" fill="#20e020" stroke="#106010" stroke-width="0.600"/><path d="M18.1 11.4 L18.1 21.1 L20.4 19.1 L23.6 25.8 L25.7 24.8 L22.7 18.4 L25.5 18.1z" fill="#000"/></svg></svg><div class="a" style="left:1278px;top:485px;width:160px;height:264px;background:#000"></div><div class="a" style="left:1438px;top:484px;width:2px;height:311px;background:#b4ecd8"></div><div class="a" style="left:1278px;top:562px;width:160px;height:112px;border:1px solid #3c8c20;border-right:none"></div><div class="a" style="left:1307px;top:584px;width:56px;height:36px;background:#ff0000"></div><div class="a" style="left:1314px;top:585px;width:37px;height:34px;border:2px solid #a0a8b0;border-left-color:#30d0e8"></div><svg class="a" style="left:1310px;top:614px" width="10" height="10"><path d="M1 1L9 9M9 1L1 9" stroke="#40d8f0" stroke-width="1"/></svg><div class="a" style="left:1278px;top:749px;width:160px;height:2px;background:#3a8270"></div><div class="a" style="left:1278px;top:793px;width:162px;height:2px;background:#b4ecd8"></div><div class="a" style="left:1276px;top:795px;width:164px;height:2px;background:#000"></div><div class="a mono" style="left:1282px;top:758.500px;font-size:13.500px;line-height:15px;letter-spacing:0.830px" id="xy1">X = -1.572482"</div><div class="a mono" style="left:1282px;top:773.500px;font-size:13.500px;line-height:15px;letter-spacing:0.830px" id="xy2">Y = 6.347326"</div><div class="a" style="left:0;top:796px;width:1440px;height:32px;background:#fffcc8"></div><div class="a" style="left:0;top:828px;width:1440px;height:2px;background:#000"></div><div class="a" style="left:1px;top:796px;width:32px;height:32px;background:#fffcc8;border:1px solid;border-color:#fffff4 #000 #000 #fffff4"></div><div class="a" style="left:4px;top:799px;width:26px;height:26px;border:2px solid;border-color:#fffff0 #c8c498 #c8c498 #fffff0"></div><svg class="a" style="left:7px;top:802px" width="21" height="21" viewBox="0 0 21 21"><rect x="0.500" y="0.500" width="19" height="19" fill="none" stroke="#000"/><path d="M4.500 4.500L16 15.500M4.500 4.500V9M4.500 4.500H9M16 15.500V11.500M16 15.500H11.500M3 17H17" stroke="#000" stroke-width="1" fill="none"/></svg><div class="a" style="left:34px;top:796px;width:31px;height:32px;background:#fffcc8;border:1px solid;border-color:#fffff4 #000 #000 #fffff4"></div><div class="a" style="left:37px;top:799px;width:25px;height:26px;border:2px solid;border-color:#fffff0 #c8c498 #c8c498 #fffff0"></div><svg class="a" style="left:39px;top:802px" width="21" height="21" viewBox="0 0 21 21"><rect x="0.500" y="0.500" width="19" height="19" fill="none" stroke="#000"/><path d="M3 16.500L16 3.500M3 16.500H17M7 5V8H9" stroke="#000" stroke-width="1.200" fill="none"/><path d="M10 16.500Q10 13.500 8 12" stroke="#000" fill="none"/><text x="11" y="14.500" font-family="Liberation Sans,sans-serif" font-size="5" font-weight="bold">oc</text></svg><div class="a" style="left:66px;top:796px;width:29px;height:32px;background:#52ceae"></div><div class="a" style="left:69px;top:799px;width:23px;height:26px;background:#fffcc8;border:2px solid;border-color:#fffff0 #b0ac80 #b0ac80 #fffff0"></div><svg class="a" style="left:72px;top:804px" width="17" height="17" viewBox="0 0 17 17"><path d="M0.500 16.500V5.500L5.500 0.500H16.500V16.500z" fill="none" stroke="#000" stroke-width="1.200"/><path d="M8.500 0.500V16.500M0.500 8.500H16.500M3 8.500V5.500L5.500 3H8.500" stroke="#000" stroke-width="1.200" fill="none"/></svg><div class="a mono" style="left:98px;top:805px;font-size:13.300px;line-height:15px">X Y :</div><div class="a" style="left:144px;top:797px;width:172px;height:31px;border:1px solid;border-color:#fffff4 #000 #000 #fffff4"></div><div class="a" style="left:146px;top:799px;width:168px;height:27px;border:2px solid;border-color:#9a9668 #e8e4b8 #e8e4b8 #9a9668"></div><svg class="a" style="left:150px;top:802px" width="5" height="14"><path d="M2.500 1V13" stroke="#000" stroke-dasharray="1 1"/><path d="M1 0.500L2.500 2L4 0.500M1 13.500L2.500 12L4 13.500" stroke="#000" stroke-width="0.800" fill="none"/></svg><div class="a" style="left:317px;top:796px;width:30px;height:32px;background:#52ceae;border-left:1px solid #3a8270;border-right:1px solid #3a8270"></div><div class="a" style="left:320px;top:799px;width:24px;height:26px;background:#fffcc8;border:2px solid;border-color:#fffff0 #b0ac80 #b0ac80 #fffff0"></div><div class="a" style="left:324px;top:804px;width:16px;height:17px;border:1px solid #000"></div><div class="a" style="left:331px;top:807px;width:2px;height:8px;background:#000"></div><div class="a" style="left:331px;top:816px;width:2px;height:2px;background:#000"></div><div class="a mono" style="left:351px;top:805px;font-size:11.700px;line-height:14px" id="msg">&lt;M1&gt; - Select first area corner</div><div class="a" style="left:1359px;top:797px;width:81px;height:31px;background:#52ceae;border-left:2px solid #000;border-right:2px solid #000"></div><div class="a" style="left:1359px;top:795px;width:81px;height:2px;background:#000"></div><div class="a" style="left:1359px;top:828px;width:81px;height:2px;background:#000"></div><div class="a" style="left:1367px;top:799px;width:69px;height:27px;background:#52ceae;border:2px solid;border-color:#b4ecd8 #3a8270 #3a8270 #b4ecd8"></div><div class="a mono" style="left:1374px;top:805px;font-size:13.500px;line-height:15px;letter-spacing:0.400px">Inch</div><div class="a" style="left:1418px;top:809px;width:11px;height:7px;background:#52ceae;border:1.500px solid;border-color:#b4ecd8 #3a8270 #3a8270 #b4ecd8"></div><div class="a" style="left:0;top:830px;width:1440px;height:29px;background:#b0fcfc"></div><div class="a" style="left:0;top:830px;width:1440px;height:2px;background:#4a8a88"></div><div class="a" style="left:0;top:832px;width:1440px;height:1px;background:#183030"></div><div class="a" style="left:3px;top:833px;width:1431px;height:3px;background:#d0ffff"></div><div class="a" style="left:0;top:830px;width:3px;height:28px;background:#4a8a88"></div><div class="a" style="left:3px;top:854px;width:1437px;height:2px;background:#5a9a98"></div><div class="a" style="left:0px;top:856px;width:1440px;height:2px;background:#d8ffff"></div><div class="a" style="left:1433px;top:833px;width:2px;height:21px;background:#5a9a98"></div><div class="a" style="left:1437px;top:830px;width:1px;height:29px;background:#000"></div><div class="a" style="left:1438px;top:830px;width:2px;height:29px;background:#e4e4e4"></div><div class="a" style="left:0;top:858px;width:1440px;height:1px;background:#000"></div><div class="a" style="left:0;top:859px;width:1440px;height:6px;background:linear-gradient(#f0f0f0,#d4d0c8 40%,#808080 80%,#404040)"></div><div class="a mono" style="left:652px;top:837px;font-size:11.700px;line-height:14px;" id="dx">DX=0,DY=7.25,D=7.25</div><svg class="a" style="left:156px;top:75px" width="1120" height="721" viewBox="156 75 1120 721" font-family="Liberation Sans,sans-serif" shape-rendering="crispEdges"><defs><pattern id="dots" width="5" height="6" patternUnits="userSpaceOnUse"><rect width="5" height="6" fill="#c9a227"/><rect x="0.800" y="0.600" width="1.100" height="1.100" fill="#000"/><rect x="3.200" y="2.200" width="1.100" height="1.100" fill="#000"/><rect x="1.600" y="3.800" width="1.100" height="1.100" fill="#000"/><rect x="3.800" y="4.900" width="0.900" height="0.900" fill="#000"/></pattern></defs><path d="M313.500 117.500H999.500Q1003.500 117.500 1003.500 121.500V741.500L999.500 745.500H309.500V121.500z" fill="none" stroke="#a878e0" stroke-width="1"/><path d="M309.5 121.5 L313.5 117.5" fill="none" stroke="#ffffff" stroke-width="1.2"/><path d="M444 112V94Q444 91 447 91H497.500Q500.500 91 500.500 94V112" fill="none" stroke="#56963e" stroke-width="1"/><path d="M451 96 L453.5 99.5 L456 96" fill="none" stroke="#56963e" stroke-width="1"/><path d="M453.5 99.5 L453.5 107" fill="none" stroke="#56963e" stroke-width="1"/><rect x="419" y="112" width="106.5" height="4" fill="none" stroke="#56963e" stroke-width="1"/><path d="M419 117 L419 136" fill="none" stroke="#cca628" stroke-width="1"/><path d="M445.5 117 L445.5 136" fill="none" stroke="#cca628" stroke-width="1"/><path d="M499 117 L499 136" fill="none" stroke="#cca628" stroke-width="1"/><path d="M525.5 117 L525.5 136" fill="none" stroke="#cca628" stroke-width="1"/><path d="M346 117V115.500Q346 114 348 114H356Q358 114 358 115.500V117M382 117V115.500Q382 114 384 114H392Q394 114 394 115.500V117" fill="none" stroke="#56963e" stroke-width="1"/><path d="M343 136 L343 118.5 L397 118.5 L397 136" fill="none" stroke="#cca628" stroke-width="1"/><path d="M339 136 L339 125.5 L343 125.5" fill="none" stroke="#56963e" stroke-width="1"/><path d="M401 136 L401 125.5 L397 125.5" fill="none" stroke="#56963e" stroke-width="1"/><path d="M539 136 L539 130 L653 130 L653 136" fill="none" stroke="#cca628" stroke-width="1"/><rect x="539" y="128" width="5" height="2" fill="none" stroke="#cca628" stroke-width="1"/><rect x="591" y="128" width="10" height="2" fill="none" stroke="#cca628" stroke-width="1"/><rect x="648" y="128" width="5" height="2" fill="none" stroke="#cca628" stroke-width="1"/><path d="M541 133.5 L651 133.5" fill="none" stroke="#cca628" stroke-width="1.5"/><text x="698" y="131" font-size="5" fill="#cca628">C10</text><rect x="699" y="138" width="6" height="4" fill="url(#dots)"/><rect x="698" y="148" width="9" height="4.5" fill="url(#dots)"/><rect x="698" y="158" width="2" height="5" fill="#cca628"/><rect x="698" y="167" width="2" height="5" fill="#cca628"/><rect x="698" y="176" width="2" height="4" fill="#cca628"/><text x="713" y="162" font-size="5.5" fill="#cca628" transform="rotate(-90 713 162)">U5</text><path d="M710.300 182.600V164H721.900V182.600H718.500V180H713.500V182.600z" fill="none" stroke="#cca628" stroke-width="1"/><path d="M728 183 L731.5 176.5" fill="none" stroke="#cca628" stroke-width="1.5"/><rect x="735" y="135" width="4" height="3.5" fill="#cca628"/><rect x="734.8" y="140" width="8.6" height="16" fill="url(#dots)"/><path d="M734.5 156V177.5M739.2 156V177.5M744 156V177.5M734.5 156H744M734.5 161.4H744M734.5 166.8H744M734.5 172.1H744M734.5 177.5H744" fill="none" stroke="#48a024" stroke-width="1.100"/><path d="M735 161 L744 161" fill="none" stroke="#e06a20" stroke-width="1"/><rect x="734" y="169" width="1.5" height="8" fill="#e03020"/><path d="M744 175.4 L749 175.4" fill="none" stroke="#cca628" stroke-width="1"/><rect x="770.4" y="143.4" width="9.5" height="8.4" fill="none" stroke="#cca628" stroke-width="1"/><path d="M774 141 L777 141" fill="none" stroke="#cca628" stroke-width="1"/><text x="781" y="150" font-size="5" fill="#cca628">TP4</text><rect x="758.4" y="162.2" width="9.5" height="35.4" fill="none" stroke="#cca628" stroke-width="1"/><path d="M765 162.2 L765 197.6" fill="none" stroke="#cca628" stroke-width="1"/><text x="759.5" y="206" font-size="6" fill="#cca628" transform="rotate(-90 759.5 206)">U4</text><path d="M777 175.4 L780 175.4" fill="none" stroke="#cca628" stroke-width="1"/><path d="M780 178V182M784.5 178V182M789 178V182M780 178H789M780 182H789" fill="none" stroke="#48a024" stroke-width="1.100"/><rect x="780" y="178" width="1.5" height="4" fill="#e06a20"/><rect x="790" y="178" width="8.5" height="4" fill="url(#dots)"/><path d="M781 186V195M785 186V195M789 186V195M781 186H789M781 190.5H789M781 195H789" fill="none" stroke="#48a024" stroke-width="1.100"/><path d="M781 186 L789 186" fill="none" stroke="#e06a20" stroke-width="1.5"/><path d="M780.5 188.5V193.5L777.5 191z" fill="#cca628" stroke="#cca628" stroke-width="0.5"/><rect x="790" y="186" width="8.5" height="9" fill="url(#dots)"/><rect x="819" y="123.2" width="9.6" height="17.9" fill="none" stroke="#cca628" stroke-width="1"/><path d="M815 153.6 L815 141.1 L832.5 141.1 L832.5 153.6" fill="none" stroke="#cca628" stroke-width="1"/><path d="M821 155 L826 155" fill="none" stroke="#cca628" stroke-width="1"/><path d="M809.2 158 L809.2 183" fill="none" stroke="#cca628" stroke-width="1"/><path d="M837.6 158 L837.6 183" fill="none" stroke="#cca628" stroke-width="1"/><path d="M818 187.4 L822 187.4" fill="none" stroke="#cca628" stroke-width="1"/><path d="M825 187.4 L829 187.4" fill="none" stroke="#cca628" stroke-width="1"/><text x="822" y="203" font-size="6" fill="#cca628" transform="rotate(-90 822 203)">J11</text><text x="809" y="211" font-size="5" fill="#cca628" transform="rotate(-90 809 211)">C7</text><rect x="774.5" y="212" width="2.5" height="8.5" fill="#cca628"/><rect x="779.4" y="212.5" width="19.1" height="8" fill="url(#dots)"/><rect x="807" y="213" width="7" height="17" fill="none" stroke="#cca628" stroke-width="1"/><path d="M810.5 217 L810.5 226" fill="none" stroke="#cca628" stroke-width="1"/><rect x="815" y="212" width="8" height="9" fill="url(#dots)"/><path d="M782 222V231M786.1 222V231M790.2 222V231M794.2 222V231M798.3 222V231M802.4 222V231M806.5 222V231M782 222H806.5M782 226.5H806.5M782 231H806.5" fill="none" stroke="#48a024" stroke-width="1.100"/><path d="M789 222 L789 231" fill="none" stroke="#cca628" stroke-width="1"/><path d="M797 222 L797 231" fill="none" stroke="#cca628" stroke-width="1"/><path d="M814.8 221V231M818.4 221V231M822 221V231M814.8 221H822M814.8 226H822M814.8 231H822" fill="none" stroke="#48a024" stroke-width="1.100"/><rect x="822" y="221" width="1.4" height="10" fill="#e06a20"/><rect x="823.4" y="222" width="19.6" height="12.5" fill="none" stroke="#cca628" stroke-width="1"/><rect x="838" y="223" width="5" height="11" fill="none" stroke="#56963e" stroke-width="1"/><text x="829" y="226.5" font-size="4" fill="#cca628">C8</text><rect x="826" y="230" width="11" height="4" fill="url(#dots)"/><text x="845" y="234" font-size="5" fill="#cca628" transform="rotate(-90 845 234)">U24</text><rect x="855" y="221" width="5" height="8.5" fill="url(#dots)"/><rect x="741" y="216.4" width="8.8" height="16.1" fill="none" stroke="#cca628" stroke-width="1"/><path d="M742.5 224.4 L744.4 224.4" fill="none" stroke="#cca628" stroke-width="1"/><path d="M746.4 224.4 L748.3 224.4" fill="none" stroke="#cca628" stroke-width="1"/><path d="M744.4 221.9 L744.4 226.9" fill="none" stroke="#cca628" stroke-width="1"/><path d="M746.4 221.9 L746.4 226.9" fill="none" stroke="#cca628" stroke-width="1"/><text x="739.5" y="231.5" font-size="5" fill="#cca628" transform="rotate(-90 739.5 231.5)">C37</text><path d="M769.4 232.5 L769.4 235.5" fill="none" stroke="#cca628" stroke-width="1"/><path d="M777.5 232.5 L777.5 235.5" fill="none" stroke="#cca628" stroke-width="1"/><path d="M786.2 232.5 L786.2 235.5" fill="none" stroke="#cca628" stroke-width="1"/><path d="M794.5 232.5 L794.5 235.5" fill="none" stroke="#cca628" stroke-width="1"/><path d="M856 117.500A5.300 5.300 0 0 1 866.600 117.500" fill="none" stroke="#56963e" stroke-width="1"/><path d="M876 117.500A5.300 5.300 0 0 1 886.600 117.500" fill="none" stroke="#56963e" stroke-width="1"/><rect x="854.5" y="117.5" width="15.8" height="21.1" fill="none" stroke="#cca628" stroke-width="1"/><rect x="874.8" y="117.5" width="15" height="21.1" fill="none" stroke="#cca628" stroke-width="1"/><path d="M870.3 118V134M874.5 118V134M870.3 118H874.5M870.3 123.3H874.5M870.3 128.7H874.5M870.3 134H874.5" fill="none" stroke="#48a024" stroke-width="1.100"/><rect x="889" y="121" width="1" height="10" fill="#e06a20"/><rect x="859.3" y="138.6" width="3.5" height="3.7" fill="#cca628"/><rect x="870" y="135" width="3.7" height="7" fill="#cca628"/><rect x="890.6" y="137" width="3" height="4" fill="#cca628"/><rect x="890" y="122" width="8" height="9" fill="url(#dots)"/><text x="902.5" y="132" font-size="5" fill="#cca628" transform="rotate(-90 902.5 132)">C5</text><rect x="907" y="121" width="7" height="14" fill="none" stroke="#56963e" stroke-width="1"/><rect x="907" y="131" width="7" height="5.5" fill="#cca628"/><path d="M908.5 128 L912.5 128" fill="none" stroke="#cca628" stroke-width="1"/><path d="M914.6 121.7V130.3M919.1 121.7V130.3M923.6 121.7V130.3M914.6 121.7H923.6M914.6 126H923.6M914.6 130.3H923.6" fill="none" stroke="#cca628" stroke-width="1.100"/><rect x="915" y="122" width="8" height="8" fill="url(#dots)"/><rect x="878.3" y="143.4" width="7.5" height="4.2" fill="none" stroke="#cca628" stroke-width="1"/><text x="887" y="147.6" font-size="5" fill="#cca628">U8</text><text x="898" y="143.8" font-size="5.5" fill="#cca628">DDL</text><rect x="914.3" y="140" width="5.7" height="11.3" fill="none" stroke="#cca628" stroke-width="1"/><rect x="915" y="144" width="4.5" height="4" fill="#cca628"/><text x="915.6" y="159.5" font-size="4.5" fill="#cca628" transform="rotate(-90 915.6 159.5)">R10</text><path d="M876 150.5 L881 153" fill="none" stroke="#cca628" stroke-width="1"/><text x="878" y="162" font-size="5.3" fill="#cca628">(8825,8870)</text><path d="M910 156.3 L910 163.4" fill="none" stroke="#cca628" stroke-width="1"/><path d="M932.4 117 L932.4 107 L962.7 107 L962.7 117" fill="none" stroke="#56963e" stroke-width="1"/><path d="M943 156.6 L932.4 156.6 L932.4 117" fill="none" stroke="#cca628" stroke-width="1"/><path d="M952.2 156.6 L962.7 156.6 L962.7 117" fill="none" stroke="#cca628" stroke-width="1"/><text x="968" y="147.5" font-size="5" fill="#cca628" transform="rotate(-90 968 147.5)">C2</text><circle cx="907" cy="180.6" r="18" fill="none" stroke="#cca628" stroke-width="1"/><path d="M895.800 166.500A18 18 0 0 0 895.800 194.700z" fill="#cca628" stroke="#cca628" stroke-width="1"/><text x="926.5" y="172.8" font-size="5" fill="#cca628">C28</text><rect x="928.6" y="179.5" width="1.6" height="1.6" fill="#e03020"/><path d="M927 197.2 L932 197.2" fill="none" stroke="#cca628" stroke-width="1"/><path d="M929.5 194.7 L929.5 199.7" fill="none" stroke="#cca628" stroke-width="1"/><circle cx="966.3" cy="197.6" r="31" fill="none" stroke="#cca628" stroke-width="1"/><path d="M986 173.700A31 31 0 0 1 986 221.500z" fill="#cca628" stroke="#cca628" stroke-width="1"/><text x="970" y="166" font-size="5" fill="#cca628">C29</text><path d="M873.5 195.5H877L875.2 198z" fill="#cca628" stroke="#cca628" stroke-width="0.5"/><rect x="875.5" y="196.9" width="6.4" height="18.3" fill="none" stroke="#cca628" stroke-width="1"/><path d="M876.5 204 L881 204" fill="none" stroke="#cca628" stroke-width="1"/><path d="M876.5 207 L881 207" fill="none" stroke="#cca628" stroke-width="1"/><rect x="877" y="200" width="3.5" height="3" fill="#cca628"/><text x="876.5" y="221" font-size="4.5" fill="#cca628" transform="rotate(-90 876.5 221)">C3</text><rect x="883.4" y="198.4" width="11.4" height="15.3" fill="none" stroke="#56963e" stroke-width="1"/><text x="888.5" y="220.5" font-size="4.5" fill="#cca628" transform="rotate(-90 888.5 220.5)">L3</text><rect x="896.3" y="200" width="7.5" height="13" fill="none" stroke="#cca628" stroke-width="1"/><path d="M896.3 206 L903.8 206" fill="none" stroke="#cca628" stroke-width="1"/><text x="898.5" y="220" font-size="4.5" fill="#cca628" transform="rotate(-90 898.5 220)">C7</text><text x="906.5" y="212" font-size="4.5" fill="#cca628" transform="rotate(-90 906.5 212)">R1</text><rect x="904.9" y="213" width="7" height="17.2" fill="none" stroke="#cca628" stroke-width="1"/><path d="M906.4 221.6 L907.4 221.6" fill="none" stroke="#cca628" stroke-width="1"/><path d="M909.4 221.6 L910.4 221.6" fill="none" stroke="#cca628" stroke-width="1"/><path d="M907.4 219.1 L907.4 224.1" fill="none" stroke="#cca628" stroke-width="1"/><path d="M909.4 219.1 L909.4 224.1" fill="none" stroke="#cca628" stroke-width="1"/><rect x="912" y="212" width="8" height="8.5" fill="url(#dots)"/><path d="M880 222V231M884 222V231M888 222V231M892 222V231M896 222V231M900 222V231M904 222V231M880 222H904M880 226.5H904M880 231H904" fill="none" stroke="#48a024" stroke-width="1.100"/><path d="M884 222 L884 231" fill="none" stroke="#cca628" stroke-width="1"/><path d="M892 222 L892 231" fill="none" stroke="#cca628" stroke-width="1"/><path d="M900 222 L900 231" fill="none" stroke="#cca628" stroke-width="1"/><rect x="913" y="221" width="3" height="10" fill="#e03020" opacity="0.8"/><path d="M916 221V231M920 221V231M916 221H920M916 226H920M916 231H920" fill="none" stroke="#48a024" stroke-width="1.100"/><rect x="920.3" y="221.2" width="21.4" height="13.6" fill="none" stroke="#cca628" stroke-width="1"/><rect x="935.5" y="222" width="6.2" height="13.5" fill="none" stroke="#56963e" stroke-width="1"/><text x="925" y="220.5" font-size="4.5" fill="#cca628">C6</text><rect x="924" y="230" width="10" height="4" fill="url(#dots)"/><text x="943.5" y="236.3" font-size="5" fill="#cca628" transform="rotate(-90 943.5 236.3)">U25</text><rect x="855.3" y="221.2" width="23.3" height="9" fill="url(#dots)"/><path d="M866.5 232.5 L866.5 235.5" fill="none" stroke="#cca628" stroke-width="1"/><path d="M875.6 232.5 L875.6 235.5" fill="none" stroke="#cca628" stroke-width="1"/><path d="M884.9 232.5 L884.9 235.5" fill="none" stroke="#cca628" stroke-width="1"/><path d="M892.8 232.5 L892.8 235.5" fill="none" stroke="#cca628" stroke-width="1"/><rect x="761.4" y="237.2" width="38.3" height="28.6" fill="none" stroke="#56963e" stroke-width="1"/><text x="749.4" y="256.3" font-size="6" fill="#cca628">U7_</text><path d="M763.7 267.5 L763.7 270" fill="none" stroke="#cca628" stroke-width="1"/><path d="M772.4 267.5 L772.4 270" fill="none" stroke="#cca628" stroke-width="1"/><path d="M781 267.5 L781 270" fill="none" stroke="#cca628" stroke-width="1"/><path d="M789.2 267.5 L789.2 270" fill="none" stroke="#cca628" stroke-width="1"/><path d="M802 245 L804 245" fill="none" stroke="#cca628" stroke-width="1"/><path d="M802 262.3 L804 262.3" fill="none" stroke="#cca628" stroke-width="1"/><path d="M756 241.3 L758 241.3" fill="none" stroke="#cca628" stroke-width="1"/><path d="M756 247.3 L758 247.3" fill="none" stroke="#cca628" stroke-width="1"/><path d="M805 239V254M808.7 239V254M805 239H808.7M805 242.8H808.7M805 246.5H808.7M805 250.2H808.7M805 254H808.7" fill="none" stroke="#48a024" stroke-width="1.100"/><rect x="808.7" y="240" width="1.1" height="14" fill="#e06a20"/><rect x="809.5" y="238.3" width="4.5" height="19.5" fill="url(#dots)"/><text x="819" y="245" font-size="5" fill="#cca628" transform="rotate(-90 819 245)">C5</text><rect x="815" y="247.3" width="15" height="21.5" fill="none" stroke="#cca628" stroke-width="1"/><path d="M815 257.8 L830 257.8" fill="none" stroke="#cca628" stroke-width="1"/><path d="M821 255.8 L821 259.8" fill="none" stroke="#cca628" stroke-width="1"/><path d="M823.5 255.8 L823.5 259.8" fill="none" stroke="#cca628" stroke-width="1"/><text x="846.3" y="254" font-size="5.5" fill="#cca628">U23</text><rect x="853.3" y="240.3" width="1.2" height="1.2" fill="#cca628"/><path d="M853 255.5 L857 255.5" fill="none" stroke="#cca628" stroke-width="1"/><rect x="837.5" y="262.3" width="1.2" height="1.2" fill="#cca628"/><path d="M838 281.4 L840 281.4" fill="none" stroke="#cca628" stroke-width="1"/><rect x="711" y="272.5" width="8.8" height="16.1" fill="none" stroke="#cca628" stroke-width="1"/><path d="M712.5 280.6 L714.4 280.6" fill="none" stroke="#cca628" stroke-width="1"/><path d="M716.4 280.6 L718.3 280.6" fill="none" stroke="#cca628" stroke-width="1"/><path d="M714.4 278.1 L714.4 283.1" fill="none" stroke="#cca628" stroke-width="1"/><path d="M716.4 278.1 L716.4 283.1" fill="none" stroke="#cca628" stroke-width="1"/><text x="709.5" y="284" font-size="4.5" fill="#cca628" transform="rotate(-90 709.5 284)">C3</text><rect x="774.5" y="271.3" width="15.9" height="15.5" fill="none" stroke="#cca628" stroke-width="1"/><path d="M774.5 279.1 L790.4 279.1" fill="none" stroke="#cca628" stroke-width="1"/><path d="M780.5 273.8 L784.5 273.8" fill="none" stroke="#cca628" stroke-width="1"/><path d="M780.5 275.8 L784.5 275.8" fill="none" stroke="#cca628" stroke-width="1"/><path d="M782.5 272.3 L782.5 273.8" fill="none" stroke="#cca628" stroke-width="1"/><path d="M782.5 275.8 L782.5 277.3" fill="none" stroke="#cca628" stroke-width="1"/><path d="M780.5 281.6 L784.5 281.6" fill="none" stroke="#cca628" stroke-width="1"/><path d="M780.5 283.6 L784.5 283.6" fill="none" stroke="#cca628" stroke-width="1"/><path d="M782.5 280.1 L782.5 281.6" fill="none" stroke="#cca628" stroke-width="1"/><path d="M782.5 283.6 L782.5 285.1" fill="none" stroke="#cca628" stroke-width="1"/><rect x="794.5" y="271.3" width="16.2" height="15.5" fill="none" stroke="#cca628" stroke-width="1"/><path d="M794.5 279.1 L810.7 279.1" fill="none" stroke="#cca628" stroke-width="1"/><path d="M800.6 273.8 L804.6 273.8" fill="none" stroke="#cca628" stroke-width="1"/><path d="M800.6 275.8 L804.6 275.8" fill="none" stroke="#cca628" stroke-width="1"/><path d="M802.6 272.3 L802.6 273.8" fill="none" stroke="#cca628" stroke-width="1"/><path d="M802.6 275.8 L802.6 277.3" fill="none" stroke="#cca628" stroke-width="1"/><path d="M800.6 281.6 L804.6 281.6" fill="none" stroke="#cca628" stroke-width="1"/><path d="M800.6 283.6 L804.6 283.6" fill="none" stroke="#cca628" stroke-width="1"/><path d="M802.6 280.1 L802.6 281.6" fill="none" stroke="#cca628" stroke-width="1"/><path d="M802.6 283.6 L802.6 285.1" fill="none" stroke="#cca628" stroke-width="1"/><text x="764.4" y="277" font-size="5" fill="#cca628">C68</text><text x="764.4" y="284" font-size="5" fill="#cca628">C67</text><text x="812" y="277" font-size="5" fill="#cca628">C71</text><text x="812" y="284" font-size="5" fill="#cca628">C66</text><path d="M778.4 286.4V293.4M782.3 286.4V293.4M786.2 286.4V293.4M778.4 286.4H786.2M778.4 289.9H786.2M778.4 293.4H786.2" fill="none" stroke="#48a024" stroke-width="1.100"/><rect x="787.7" y="286.8" width="7.3" height="7.8" fill="url(#dots)"/><path d="M710.3 295V303.7M714.8 295V303.7M719.3 295V303.7M710.3 295H719.3M710.3 303.7H719.3" fill="none" stroke="#cca628" stroke-width="1.100"/><path d="M710.3 295 L719.3 295" fill="none" stroke="#e06a20" stroke-width="1.5"/><rect x="710" y="295" width="1.2" height="8.7" fill="#e06a20"/><path d="M715 297V303M719 297V303M715 297H719M715 303H719" fill="none" stroke="#48a024" stroke-width="1.100"/><text x="720.8" y="303.7" font-size="7" fill="#cca628">88</text><path d="M698.3 309V372.5M701.3 309V372.5M704.3 309V372.5M698.3 309H704.3M698.3 313H704.3M698.3 316.9H704.3M698.3 320.9H704.3M698.3 324.9H704.3M698.3 328.8H704.3M698.3 332.8H704.3M698.3 336.8H704.3M698.3 340.8H704.3M698.3 344.7H704.3M698.3 348.7H704.3M698.3 352.7H704.3M698.3 356.6H704.3M698.3 360.6H704.3M698.3 364.6H704.3M698.3 368.5H704.3M698.3 372.5H704.3" fill="none" stroke="#48a024" stroke-width="1.100"/><rect x="705" y="315.4" width="8.7" height="57.9" fill="url(#dots)"/><rect x="714.3" y="311.5" width="1.2" height="1.2" fill="#cca628"/><rect x="725.3" y="318.7" width="15.1" height="3.3" fill="url(#dots)"/><rect x="726" y="323.2" width="8.3" height="8.8" fill="none" stroke="#cca628" stroke-width="1"/><text x="737.8" y="330" font-size="5" fill="#cca628">D42</text><path d="M723 326 L724.5 326 L724.5 330 L723 330" fill="none" stroke="#cca628" stroke-width="1"/><text x="810" y="312.4" font-size="5" fill="#cca628" transform="rotate(-90 810 312.4)">C9</text><rect x="782.4" y="312.4" width="23.3" height="8.6" fill="url(#dots)"/><rect x="807.2" y="314.2" width="6.8" height="18" fill="none" stroke="#cca628" stroke-width="1"/><path d="M810.6 318 L810.6 328" fill="none" stroke="#cca628" stroke-width="1"/><rect x="815" y="312.4" width="8" height="8.6" fill="url(#dots)"/><rect x="838.8" y="310.4" width="4.2" height="9.8" fill="url(#dots)"/><path d="M782.4 321.7V331.5M786.3 321.7V331.5M790.2 321.7V331.5M794.2 321.7V331.5M798.1 321.7V331.5M802 321.7V331.5M782.4 321.7H802M782.4 326.6H802M782.4 331.5H802" fill="none" stroke="#48a024" stroke-width="1.100"/><rect x="782" y="321.7" width="1.6" height="9.8" fill="#e06a20"/><path d="M802 321.7V331.5M807 321.7V331.5M802 321.7H807M802 326.6H807M802 331.5H807" fill="none" stroke="#cca628" stroke-width="1.100"/><path d="M814.8 321.7V330.7M818.5 321.7V330.7M822.3 321.7V330.7M814.8 321.7H822.3M814.8 326.2H822.3M814.8 330.7H822.3" fill="none" stroke="#48a024" stroke-width="1.100"/><rect x="822.3" y="321.7" width="1.3" height="9.3" fill="#e06a20"/><rect x="823.6" y="321.7" width="13.7" height="12.8" fill="none" stroke="#cca628" stroke-width="1"/><rect x="838" y="321.7" width="5.3" height="13.5" fill="none" stroke="#56963e" stroke-width="1"/><path d="M828 325 L833 325" fill="none" stroke="#cca628" stroke-width="1"/><path d="M828 331 L833 331" fill="none" stroke="#cca628" stroke-width="1"/><rect x="761.4" y="337" width="38.3" height="28.5" fill="none" stroke="#56963e" stroke-width="1"/><text x="749.4" y="354" font-size="6" fill="#cca628">U1_</text><path d="M769.4 333 L769.4 335.3" fill="none" stroke="#cca628" stroke-width="1"/><path d="M777.5 333 L777.5 335.3" fill="none" stroke="#cca628" stroke-width="1"/><path d="M786.2 333 L786.2 335.3" fill="none" stroke="#cca628" stroke-width="1"/><path d="M794.5 333 L794.5 335.3" fill="none" stroke="#cca628" stroke-width="1"/><path d="M763.7 368 L763.7 370.3" fill="none" stroke="#cca628" stroke-width="1"/><path d="M772.4 368 L772.4 370.3" fill="none" stroke="#cca628" stroke-width="1"/><path d="M781 368 L781 370.3" fill="none" stroke="#cca628" stroke-width="1"/><path d="M789.2 368 L789.2 370.3" fill="none" stroke="#cca628" stroke-width="1"/><path d="M756 340.5 L758 340.5" fill="none" stroke="#cca628" stroke-width="1"/><path d="M756 346.5 L758 346.5" fill="none" stroke="#cca628" stroke-width="1"/><path d="M802 345 L804 345" fill="none" stroke="#cca628" stroke-width="1"/><path d="M802 362 L804 362" fill="none" stroke="#cca628" stroke-width="1"/><path d="M805 339V347.2M808.7 339V347.2M805 339H808.7M805 343.1H808.7M805 347.2H808.7" fill="none" stroke="#48a024" stroke-width="1.100"/><rect x="809.5" y="338.2" width="3.8" height="18.1" fill="url(#dots)"/><rect x="748.6" y="364.3" width="1.5" height="1.9" fill="#48a024"/><rect x="752" y="364.3" width="1.5" height="1.9" fill="#48a024"/><rect x="755.5" y="364.3" width="1.5" height="1.9" fill="#48a024"/><text x="828.3" y="352.5" font-size="7" fill="#cca628">55</text><rect x="838" y="339" width="6.8" height="14.3" fill="none" stroke="#cca628" stroke-width="1"/><rect x="838.5" y="339.5" width="5.8" height="2.5" fill="#56963e"/><path d="M839.5 347 L843.3 347" fill="none" stroke="#cca628" stroke-width="1"/><path d="M842.2 345.5V348.5L840 347z" fill="#cca628" stroke="#cca628" stroke-width="0.5"/><rect x="846.3" y="339" width="6.7" height="14.3" fill="none" stroke="#cca628" stroke-width="1"/><rect x="846.8" y="339.5" width="5.7" height="2.5" fill="#56963e"/><path d="M847.8 347 L851.5 347" fill="none" stroke="#cca628" stroke-width="1"/><path d="M850.5 345.5V348.5L848.3 347z" fill="#cca628" stroke="#cca628" stroke-width="0.5"/><path d="M855.5 353.5H859.3L857.4 356.3z" fill="#cca628" stroke="#cca628" stroke-width="0.5"/><rect x="859.3" y="237.2" width="37.6" height="28.6" fill="none" stroke="#56963e" stroke-width="1"/><path d="M861.7 267.5 L861.7 270" fill="none" stroke="#cca628" stroke-width="1"/><path d="M870.3 267.5 L870.3 270" fill="none" stroke="#cca628" stroke-width="1"/><path d="M878.6 267.5 L878.6 270" fill="none" stroke="#cca628" stroke-width="1"/><path d="M887.3 267.5 L887.3 270" fill="none" stroke="#cca628" stroke-width="1"/><rect x="853" y="240.3" width="1.5" height="1.2" fill="#cca628"/><path d="M854 247.3 L856.5 247.3" fill="none" stroke="#cca628" stroke-width="1"/><path d="M853 255.5 L856.5 255.5" fill="none" stroke="#cca628" stroke-width="1"/><path d="M899.6 245 L901.9 245" fill="none" stroke="#cca628" stroke-width="1"/><path d="M899.6 262.3 L901.9 262.3" fill="none" stroke="#cca628" stroke-width="1"/><path d="M901.9 239.3V254M906.5 239.3V254M901.9 239.3H906.5M901.9 243H906.5M901.9 246.7H906.5M901.9 250.3H906.5M901.9 254H906.5" fill="none" stroke="#48a024" stroke-width="1.100"/><rect x="906.5" y="239.3" width="4.4" height="18.7" fill="url(#dots)"/><rect x="901.5" y="253" width="4.5" height="1.3" fill="#e06a20"/><rect x="871" y="271.3" width="17.8" height="15.5" fill="none" stroke="#cca628" stroke-width="1"/><path d="M871 279.1 L888.8 279.1" fill="none" stroke="#cca628" stroke-width="1"/><path d="M877.9 273.8 L881.9 273.8" fill="none" stroke="#cca628" stroke-width="1"/><path d="M877.9 275.8 L881.9 275.8" fill="none" stroke="#cca628" stroke-width="1"/><path d="M879.9 272.3 L879.9 273.8" fill="none" stroke="#cca628" stroke-width="1"/><path d="M879.9 275.8 L879.9 277.3" fill="none" stroke="#cca628" stroke-width="1"/><path d="M877.9 281.6 L881.9 281.6" fill="none" stroke="#cca628" stroke-width="1"/><path d="M877.9 283.6 L881.9 283.6" fill="none" stroke="#cca628" stroke-width="1"/><path d="M879.9 280.1 L879.9 281.6" fill="none" stroke="#cca628" stroke-width="1"/><path d="M879.9 283.6 L879.9 285.1" fill="none" stroke="#cca628" stroke-width="1"/><rect x="891.3" y="271.3" width="17.3" height="15.5" fill="none" stroke="#cca628" stroke-width="1"/><path d="M891.3 279.1 L908.6 279.1" fill="none" stroke="#cca628" stroke-width="1"/><path d="M898 273.8 L902 273.8" fill="none" stroke="#cca628" stroke-width="1"/><path d="M898 275.8 L902 275.8" fill="none" stroke="#cca628" stroke-width="1"/><path d="M900 272.3 L900 273.8" fill="none" stroke="#cca628" stroke-width="1"/><path d="M900 275.8 L900 277.3" fill="none" stroke="#cca628" stroke-width="1"/><path d="M898 281.6 L902 281.6" fill="none" stroke="#cca628" stroke-width="1"/><path d="M898 283.6 L902 283.6" fill="none" stroke="#cca628" stroke-width="1"/><path d="M900 280.1 L900 281.6" fill="none" stroke="#cca628" stroke-width="1"/><path d="M900 283.6 L900 285.1" fill="none" stroke="#cca628" stroke-width="1"/><text x="860.2" y="277" font-size="5" fill="#cca628">C81</text><text x="860.2" y="284.5" font-size="5" fill="#cca628">C74</text><text x="910" y="277" font-size="5" fill="#cca628">C76</text><text x="910" y="284.5" font-size="5" fill="#cca628">C74</text><path d="M875.9 286.4V293.9M879.6 286.4V293.9M883.4 286.4V293.9M875.9 286.4H883.4M875.9 290.1H883.4M875.9 293.9H883.4" fill="none" stroke="#48a024" stroke-width="1.100"/><rect x="884.9" y="287.9" width="9" height="7.1" fill="url(#dots)"/><rect x="857" y="290.5" width="1" height="1.2" fill="#cca628"/><rect x="925.2" y="255.3" width="9.3" height="7.5" fill="url(#dots)"/><path d="M936 255.3V262.3M940.2 255.3V262.3M944.4 255.3V262.3M936 255.3H944.4M936 258.8H944.4M936 262.3H944.4" fill="none" stroke="#48a024" stroke-width="1.100"/><rect x="936.5" y="255.8" width="7.5" height="6.2" fill="#56963e" opacity="0.5"/><path d="M944.4 255.5V262L947.7 258.8z" fill="#cca628" stroke="#cca628" stroke-width="0.5"/><path d="M934.2 264.3V273.6M939.5 264.3V273.6M944.7 264.3V273.6M934.2 264.3H944.7M934.2 269H944.7M934.2 273.6H944.7" fill="none" stroke="#cca628" stroke-width="1.100"/><path d="M939.4 264.3 L939.4 273.6" fill="none" stroke="#e06a20" stroke-width="1"/><path d="M934.2 264.3 L944.7 264.3" fill="none" stroke="#56963e" stroke-width="1"/><rect x="930.4" y="273.9" width="9.8" height="7.1" fill="url(#dots)"/><rect x="930.4" y="280.5" width="9.8" height="1.5" fill="#e06a20"/><path d="M946 266.4 L949 266.4" fill="none" stroke="#cca628" stroke-width="1"/><path d="M944.5 278.4 L949 278.4" fill="none" stroke="#cca628" stroke-width="1"/><path d="M955.200 289.800V255.300H960.500V258H963.800V255.300H969V289.800z" fill="none" stroke="#cca628" stroke-width="1"/><text x="958.8" y="253.3" font-size="6" fill="#cca628" transform="rotate(-90 958.8 253.3)">U33</text><path d="M975 264.6 L977.5 264.6" fill="none" stroke="#cca628" stroke-width="1"/><path d="M975 275.1 L979 275.1" fill="none" stroke="#cca628" stroke-width="1"/><path d="M975 286.4 L977 286.4" fill="none" stroke="#cca628" stroke-width="1"/><path d="M977.5 240.8 L987.5 240.8" fill="none" stroke="#e03020" stroke-width="1.5"/><path d="M977.5 242V254.8M982.5 242V254.8M987.5 242V254.8M977.5 242H987.5M977.5 246.3H987.5M977.5 250.5H987.5M977.5 254.8H987.5" fill="none" stroke="#48a024" stroke-width="1.100"/><rect x="988.3" y="242.8" width="8.2" height="6.7" fill="url(#dots)"/><text x="989" y="248.5" font-size="7" fill="#cca628">L</text><rect x="977.8" y="255.6" width="9" height="13.4" fill="#48a024" opacity="0.85"/><path d="M977.8 255.6V269M982.3 255.6V269M986.8 255.6V269M977.8 255.6H986.8M977.8 260.1H986.8M977.8 264.5H986.8M977.8 269H986.8" fill="none" stroke="#48a024" stroke-width="1.100"/><rect x="977.3" y="255.6" width="1.2" height="13.9" fill="#e06a20"/><rect x="977.3" y="268.5" width="9.7" height="1.3" fill="#e06a20"/><rect x="987" y="251" width="8.8" height="19.3" fill="url(#dots)"/><path d="M964.2 306 L964.2 304.4 L986.8 304.4 L986.8 306" fill="none" stroke="#cca628" stroke-width="1"/><text x="974" y="303.5" font-size="4" fill="#cca628">J4</text><path d="M964.2 329.5 L964.2 331 L986.8 331 L986.8 329.5" fill="none" stroke="#cca628" stroke-width="1"/><path d="M975 331 L975 333 L978 333" fill="none" stroke="#cca628" stroke-width="1"/><text x="970.5" y="340.5" font-size="5.5" fill="#cca628" transform="rotate(-90 970.5 340.5)">J5</text><text x="945" y="312" font-size="4.5" fill="#cca628">R9</text><path d="M952.2 306.4V312M957.5 306.4V312M962.7 306.4V312M952.2 306.4H962.7M952.2 312H962.7" fill="none" stroke="#cca628" stroke-width="1.100"/><path d="M952.2 306.4 L962.7 306.4" fill="none" stroke="#e06a20" stroke-width="1.5"/><text x="945" y="328.5" font-size="4.5" fill="#cca628">D2</text><path d="M950 324.4V329M954.2 324.4V329M958.5 324.4V329M962.7 324.4V329M950 324.4H962.7M950 329H962.7" fill="none" stroke="#cca628" stroke-width="1.100"/><rect x="864.3" y="337.5" width="6" height="15.8" fill="none" stroke="#cca628" stroke-width="1"/><rect x="864.8" y="338" width="5" height="3" fill="#56963e"/><path d="M865.8 347 L868.8 347" fill="none" stroke="#cca628" stroke-width="1"/><path d="M868 345.5V348.5L865.8 347z" fill="#cca628" stroke="#cca628" stroke-width="0.5"/><text x="865.3" y="336" font-size="4.5" fill="#cca628" transform="rotate(-90 865.3 336)">R5</text><rect x="865.3" y="334.5" width="4" height="3" fill="#cca628"/><rect x="872.5" y="337.5" width="6.1" height="15.8" fill="none" stroke="#cca628" stroke-width="1"/><rect x="873" y="338" width="5.1" height="3" fill="#56963e"/><path d="M874 347 L877.1 347" fill="none" stroke="#cca628" stroke-width="1"/><path d="M876.2 345.5V348.5L874 347z" fill="#cca628" stroke="#cca628" stroke-width="0.5"/><text x="873.5" y="336" font-size="4.5" fill="#cca628" transform="rotate(-90 873.5 336)">R6</text><rect x="873.5" y="334.5" width="4.1" height="3" fill="#cca628"/><rect x="890.3" y="337.5" width="6" height="15.8" fill="none" stroke="#cca628" stroke-width="1"/><rect x="890.8" y="338" width="5" height="3" fill="#56963e"/><path d="M891.8 347 L894.8 347" fill="none" stroke="#cca628" stroke-width="1"/><path d="M894 345.5V348.5L891.8 347z" fill="#cca628" stroke="#cca628" stroke-width="0.5"/><text x="891.3" y="336" font-size="4.5" fill="#cca628" transform="rotate(-90 891.3 336)">R31</text><rect x="891.3" y="334.5" width="4" height="3" fill="#cca628"/><rect x="898.4" y="337.5" width="6" height="15.8" fill="none" stroke="#cca628" stroke-width="1"/><rect x="898.9" y="338" width="5" height="3" fill="#56963e"/><path d="M899.9 347 L902.9 347" fill="none" stroke="#cca628" stroke-width="1"/><path d="M902.1 345.5V348.5L899.9 347z" fill="#cca628" stroke="#cca628" stroke-width="0.5"/><text x="899.4" y="336" font-size="4.5" fill="#cca628" transform="rotate(-90 899.4 336)">R5</text><rect x="899.4" y="334.5" width="4" height="3" fill="#cca628"/><rect x="848" y="337.5" width="5" height="15.8" fill="none" stroke="#cca628" stroke-width="1"/><path d="M879.3 353.3H885.3L882.3 356.3z" fill="#cca628" stroke="#cca628" stroke-width="0.5"/><path d="M905.9 353.3H912.4L909.1 356.3z" fill="#cca628" stroke="#cca628" stroke-width="0.5"/><rect x="833.5" y="357.2" width="24.5" height="32.2" fill="none" stroke="#cca628" stroke-width="1"/><rect x="859.3" y="357.2" width="24.5" height="32.2" fill="none" stroke="#cca628" stroke-width="1"/><rect x="885.3" y="357.2" width="24.8" height="32.2" fill="none" stroke="#cca628" stroke-width="1"/><path d="M866 355.5 L867.5 358.5" fill="none" stroke="#56963e" stroke-width="1.5"/><rect x="911.3" y="371" width="3.7" height="6" fill="#cca628"/><rect x="918" y="371" width="3.8" height="6" fill="#cca628"/><rect x="924.9" y="370.3" width="4.1" height="6.7" fill="#cca628"/><rect x="774.5" y="370.3" width="15.9" height="16.2" fill="none" stroke="#cca628" stroke-width="1"/><path d="M774.5 378.4 L790.4 378.4" fill="none" stroke="#cca628" stroke-width="1"/><path d="M780.5 372.8 L784.5 372.8" fill="none" stroke="#cca628" stroke-width="1"/><path d="M780.5 374.8 L784.5 374.8" fill="none" stroke="#cca628" stroke-width="1"/><path d="M782.5 371.3 L782.5 372.8" fill="none" stroke="#cca628" stroke-width="1"/><path d="M782.5 374.8 L782.5 376.3" fill="none" stroke="#cca628" stroke-width="1"/><path d="M780.5 380.9 L784.5 380.9" fill="none" stroke="#cca628" stroke-width="1"/><path d="M780.5 382.9 L784.5 382.9" fill="none" stroke="#cca628" stroke-width="1"/><path d="M782.5 379.4 L782.5 380.9" fill="none" stroke="#cca628" stroke-width="1"/><path d="M782.5 382.9 L782.5 384.4" fill="none" stroke="#cca628" stroke-width="1"/><rect x="794.5" y="370.3" width="16.2" height="16.2" fill="none" stroke="#cca628" stroke-width="1"/><path d="M794.5 378.4 L810.7 378.4" fill="none" stroke="#cca628" stroke-width="1"/><path d="M800.6 372.8 L804.6 372.8" fill="none" stroke="#cca628" stroke-width="1"/><path d="M800.6 374.8 L804.6 374.8" fill="none" stroke="#cca628" stroke-width="1"/><path d="M802.6 371.3 L802.6 372.8" fill="none" stroke="#cca628" stroke-width="1"/><path d="M802.6 374.8 L802.6 376.3" fill="none" stroke="#cca628" stroke-width="1"/><path d="M800.6 380.9 L804.6 380.9" fill="none" stroke="#cca628" stroke-width="1"/><path d="M800.6 382.9 L804.6 382.9" fill="none" stroke="#cca628" stroke-width="1"/><path d="M802.6 379.4 L802.6 380.9" fill="none" stroke="#cca628" stroke-width="1"/><path d="M802.6 382.9 L802.6 384.4" fill="none" stroke="#cca628" stroke-width="1"/><text x="764.4" y="377.8" font-size="5" fill="#cca628">C70</text><text x="764.4" y="383.8" font-size="5" fill="#cca628">C6</text><text x="813.3" y="377" font-size="5" fill="#cca628">C69</text><text x="813.3" y="383.8" font-size="5" fill="#cca628">C60</text><path d="M778.4 386.5V393.6M782.3 386.5V393.6M786.2 386.5V393.6M778.4 386.5H786.2M778.4 390.1H786.2M778.4 393.6H786.2" fill="none" stroke="#48a024" stroke-width="1.100"/><rect x="789.2" y="386.5" width="8.8" height="7.8" fill="url(#dots)"/><rect x="707.3" y="377.5" width="13.5" height="13.1" fill="none" stroke="#cca628" stroke-width="1"/><text x="703.5" y="387" font-size="5" fill="#cca628">U</text><path d="M723.4 379.5 L726.8 379.5" fill="none" stroke="#cca628" stroke-width="1"/><path d="M723.4 381.5 L726.8 381.5" fill="none" stroke="#cca628" stroke-width="1"/><path d="M723.4 383.5 L726.8 383.5" fill="none" stroke="#cca628" stroke-width="1"/><path d="M723.4 385.5 L726.8 385.5" fill="none" stroke="#cca628" stroke-width="1"/><path d="M723.4 387.5 L726.8 387.5" fill="none" stroke="#cca628" stroke-width="1"/><rect x="722.3" y="388.3" width="6.5" height="12.1" fill="none" stroke="#cca628" stroke-width="1"/><path d="M724 394.5 L727 394.5" fill="none" stroke="#cca628" stroke-width="1"/><rect x="704.3" y="392.5" width="16.5" height="7.9" fill="none" stroke="#cca628" stroke-width="1"/><path d="M712.5 394 L712.5 395.4" fill="none" stroke="#cca628" stroke-width="1"/><path d="M712.5 397.4 L712.5 398.9" fill="none" stroke="#cca628" stroke-width="1"/><path d="M710 395.4 L715 395.4" fill="none" stroke="#cca628" stroke-width="1"/><path d="M710 397.4 L715 397.4" fill="none" stroke="#cca628" stroke-width="1"/><text x="698.3" y="398.9" font-size="4.5" fill="#cca628">C8</text><path d="M714 405.6V409.8M717.8 405.6V409.8M721.6 405.6V409.8M714 405.6H721.6M714 409.8H721.6" fill="none" stroke="#cca628" stroke-width="1.100"/><path d="M714 405.6 L721.6 405.6" fill="none" stroke="#e03020" stroke-width="1"/><text x="722.3" y="409.8" font-size="4.5" fill="#cca628">C270</text><text x="714.5" y="421.5" font-size="5" fill="#cca628">C6</text><path d="M713.3 422V426M717.6 422V426M721.9 422V426M713.3 422H721.9M713.3 426H721.9" fill="none" stroke="#48a024" stroke-width="1.100"/><path d="M713.3 427 L721.9 427" fill="none" stroke="#e03020" stroke-width="1"/><rect x="732.8" y="418.4" width="6.1" height="6.6" fill="url(#dots)"/><rect x="732" y="425" width="8.4" height="5.4" fill="url(#dots)"/><path d="M708 431 L739.6 431" fill="none" stroke="#cca628" stroke-width="1"/><path d="M706.5 429H709L707.8 431.5z" fill="#cca628" stroke="#cca628" stroke-width="0.5"/><path d="M700.2 433.4V447.7M705.2 433.4V447.7M710.3 433.4V447.7M700.2 433.4H710.3M700.2 438.2H710.3M700.2 442.9H710.3M700.2 447.7H710.3" fill="none" stroke="#cca628" stroke-width="1.100"/><path d="M712.5 433.4V441.7M717.4 433.4V441.7M722.3 433.4V441.7M712.5 433.4H722.3M712.5 437.5H722.3M712.5 441.7H722.3" fill="none" stroke="#48a024" stroke-width="1.100"/><path d="M712.5 442.5 L722.3 442.5" fill="none" stroke="#e03020" stroke-width="1"/><text x="723.8" y="437" font-size="4.5" fill="#cca628">R33</text><text x="723.8" y="442" font-size="4.5" fill="#cca628">R31</text><rect x="700.5" y="448.5" width="23.3" height="21.7" fill="none" stroke="#cca628" stroke-width="1"/><path d="M723.8 448.5 L723.8 470.2" fill="none" stroke="#56963e" stroke-width="1"/><rect x="700.5" y="472.3" width="23.3" height="21.7" fill="none" stroke="#cca628" stroke-width="1"/><path d="M723.8 472.3 L723.8 494 L700.5 494" fill="none" stroke="#56963e" stroke-width="1"/><text x="742.3" y="437" font-size="4.5" fill="#cca628">U36B</text><rect x="738.4" y="438.4" width="14.6" height="6.3" fill="none" stroke="#cca628" stroke-width="1"/><rect x="744" y="440.5" width="1.5" height="2" fill="#cca628"/><rect x="747.5" y="440.5" width="1.5" height="2" fill="#cca628"/><text x="729.4" y="454" font-size="5" fill="#cca628">U52</text><rect x="738.4" y="448" width="14.6" height="6.5" fill="none" stroke="#cca628" stroke-width="1"/><rect x="744" y="450.5" width="1.5" height="2" fill="#cca628"/><rect x="747.5" y="450.5" width="1.5" height="2" fill="#cca628"/><rect x="738.4" y="462" width="13.2" height="13.5" fill="none" stroke="#cca628" stroke-width="1"/><text x="726" y="466" font-size="5.5" fill="#cca628">U9</text><text x="733" y="472" font-size="5" fill="#cca628">L</text><rect x="732.8" y="457" width="4.2" height="5" fill="#e06a20" opacity="0.9"/><path d="M737 457V462M741.3 457V462M745.6 457V462M737 457H745.6M737 462H745.6" fill="none" stroke="#48a024" stroke-width="1.100"/><text x="746.5" y="460.5" font-size="4.5" fill="#cca628">R4</text><rect x="753" y="456.4" width="10" height="4.1" fill="none" stroke="#cca628" stroke-width="1"/><path d="M758 460.5 L758 463" fill="none" stroke="#cca628" stroke-width="1"/><path d="M753 463.5V482M756 463.5V482M759 463.5V482M762 463.5V482M753 463.5H762M753 467.2H762M753 470.9H762M753 474.6H762M753 478.3H762M753 482H762" fill="none" stroke="#48a024" stroke-width="1.100"/><rect x="762" y="456" width="1.3" height="31" fill="#e06a20"/><rect x="762" y="436" width="37" height="8.7" fill="url(#dots)"/><path d="M763.6 445.4V455.2M767.4 445.4V455.2M763.6 445.4H767.4M763.6 450.3H767.4M763.6 455.2H767.4" fill="none" stroke="#cca628" stroke-width="1.100"/><path d="M768 446.2V453.7M771.5 446.2V453.7M775 446.2V453.7M778.5 446.2V453.7M782 446.2V453.7M785.5 446.2V453.7M789 446.2V453.7M792.5 446.2V453.7M796 446.2V453.7M768 446.2H796M768 449.9H796M768 453.7H796" fill="none" stroke="#48a024" stroke-width="1.100"/><rect x="796" y="446.2" width="1.3" height="8.8" fill="#e03020"/><rect x="768" y="453.7" width="29.3" height="1.3" fill="#e03020"/><rect x="767.4" y="464.2" width="25.6" height="25.3" fill="none" stroke="#cca628" stroke-width="1"/><path d="M767.4 489.5 L767.4 464.2 L793 464.2" fill="none" stroke="#56963e" stroke-width="1"/><path d="M774 460.5 L774 464" fill="none" stroke="#cca628" stroke-width="1"/><path d="M779.7 460.5 L779.7 464" fill="none" stroke="#cca628" stroke-width="1"/><path d="M787.7 460.5 L787.7 464" fill="none" stroke="#cca628" stroke-width="1"/><text x="796.4" y="467.2" font-size="6" fill="#cca628">U6</text><path d="M793.7 475.3 L797.5 475.3" fill="none" stroke="#cca628" stroke-width="1"/><path d="M793.7 481.3 L797.5 481.3" fill="none" stroke="#cca628" stroke-width="1"/><path d="M764.4 473 L767.4 473" fill="none" stroke="#cca628" stroke-width="1"/><path d="M764.4 481.3 L767.4 481.3" fill="none" stroke="#cca628" stroke-width="1"/><path d="M772 490.3 L772 494" fill="none" stroke="#cca628" stroke-width="1"/><path d="M778.7 490.3 L778.7 494" fill="none" stroke="#cca628" stroke-width="1"/><path d="M785.4 490.3 L785.4 494" fill="none" stroke="#cca628" stroke-width="1"/><path d="M808 458.2V504.6M811.4 458.2V504.6M814.8 458.2V504.6M808 458.2H814.8M808 461.5H814.8M808 464.8H814.8M808 468.1H814.8M808 471.5H814.8M808 474.8H814.8M808 478.1H814.8M808 481.4H814.8M808 484.7H814.8M808 488H814.8M808 491.3H814.8M808 494.7H814.8M808 498H814.8M808 501.3H814.8M808 504.6H814.8" fill="none" stroke="#48a024" stroke-width="1.100"/><rect x="807.4" y="458" width="8" height="47" fill="none" stroke="#e06a20" stroke-width="1"/><rect x="816.3" y="456" width="8.2" height="31.3" fill="url(#dots)"/><rect x="786.2" y="412" width="9.3" height="8.6" fill="none" stroke="#cca628" stroke-width="1"/><path d="M789 409.5 L792 409.5" fill="none" stroke="#cca628" stroke-width="1"/><text x="797.5" y="418.8" font-size="4.8" fill="#cca628">TP12</text><rect x="807.2" y="410" width="1.5" height="1.6" fill="#48a024"/><rect x="810.7" y="410" width="1.5" height="1.6" fill="#48a024"/><rect x="814.2" y="410" width="1.5" height="1.6" fill="#48a024"/><rect x="817" y="410" width="1.5" height="1.6" fill="#48a024"/><rect x="829" y="392" width="4" height="9.5" fill="url(#dots)"/><rect x="838" y="392" width="5.3" height="9" fill="none" stroke="#cca628" stroke-width="1"/><rect x="838.5" y="396" width="4.3" height="3.5" fill="#cca628"/><rect x="847" y="392" width="5.6" height="9" fill="none" stroke="#cca628" stroke-width="1"/><rect x="852.6" y="392" width="1" height="9" fill="#e06a20"/><path d="M840.5 389.4 L840.5 392" fill="none" stroke="#cca628" stroke-width="1"/><path d="M849.8 389.4 L849.8 392" fill="none" stroke="#cca628" stroke-width="1"/><path d="M830.5 745.5 L830.5 403.4 L1003.6 403.4" fill="none" stroke="#cca628" stroke-width="1"/><text x="849.5" y="408.5" font-size="4.5" fill="#cca628">TP2</text><rect x="847.8" y="409" width="10.2" height="9.4" fill="none" stroke="#cca628" stroke-width="1"/><path d="M846.5 412.5 L845.5 412.5 L845.5 415.5 L846.5 415.5" fill="none" stroke="#cca628" stroke-width="1"/><rect x="848.6" y="420.3" width="139.4" height="19.4" fill="none" stroke="#cca628" stroke-width="1"/><path d="M878.6 417 L878.6 419.3" fill="none" stroke="#cca628" stroke-width="1"/><path d="M922.6 417 L922.6 419.3" fill="none" stroke="#cca628" stroke-width="1"/><path d="M965.4 417 L965.4 419.3" fill="none" stroke="#cca628" stroke-width="1"/><path d="M979 415.8H986L982.5 419.1z" fill="#cca628" stroke="#cca628" stroke-width="0.5"/><path d="M861.3 441 L861.3 444.7" fill="none" stroke="#cca628" stroke-width="1"/><path d="M903.4 441 L903.4 444.7" fill="none" stroke="#cca628" stroke-width="1"/><path d="M948.5 441 L948.5 444.7" fill="none" stroke="#cca628" stroke-width="1"/><rect x="976.3" y="442.5" width="1.5" height="1.5" fill="#48a024"/><rect x="976.3" y="446.3" width="1.5" height="1.5" fill="#48a024"/><text x="989" y="432" font-size="6" fill="#cca628">J2</text><rect x="856" y="394.3" width="8.3" height="7.6" fill="url(#dots)"/><rect x="864.7" y="392.8" width="4.8" height="9.1" fill="none" stroke="#cca628" stroke-width="1"/><rect x="873.3" y="392.8" width="5.6" height="9.1" fill="none" stroke="#cca628" stroke-width="1"/><rect x="880.8" y="393.5" width="9" height="8.4" fill="url(#dots)"/><rect x="890.3" y="392.8" width="4.7" height="9.1" fill="none" stroke="#cca628" stroke-width="1"/><rect x="899.3" y="392.3" width="5.6" height="9.6" fill="none" stroke="#cca628" stroke-width="1"/><rect x="904.9" y="392.3" width="1.1" height="9.6" fill="#e03020"/><path d="M867 389.4 L867 392.8" fill="none" stroke="#cca628" stroke-width="1"/><path d="M876 389.4 L876 392.8" fill="none" stroke="#cca628" stroke-width="1"/><path d="M892.5 389.4 L892.5 392.8" fill="none" stroke="#cca628" stroke-width="1"/><path d="M902 389.4 L902 392.8" fill="none" stroke="#cca628" stroke-width="1"/><rect x="865.5" y="395.5" width="3.2" height="3" fill="#cca628"/><rect x="874.3" y="395.5" width="3.2" height="3" fill="#cca628"/><rect x="891" y="395.5" width="3.2" height="3" fill="#cca628"/><rect x="900.2" y="395.5" width="3.2" height="3" fill="#cca628"/><path d="M892.8 405.6V415M898 405.6V415M892.8 405.6H898M892.8 410.3H898M892.8 415H898" fill="none" stroke="#cca628" stroke-width="1.100"/><rect x="892.3" y="405.6" width="1.2" height="9.4" fill="#e06a20"/><path d="M898 405.6V415M902.2 405.6V415M906.5 405.6V415M898 405.6H906.5M898 410.3H906.5M898 415H906.5" fill="none" stroke="#48a024" stroke-width="1.100"/><rect x="907.2" y="405.6" width="12.7" height="9.4" fill="url(#dots)"/><path d="M754.6 470V482M757.1 470V482M759.5 470V482M762 470V482M754.6 470H762M754.6 473H762M754.6 476H762M754.6 479H762M754.6 482H762" fill="none" stroke="#48a024" stroke-width="1.100"/><rect x="731.3" y="476.3" width="13.6" height="3.5" fill="url(#dots)"/><rect x="747" y="482" width="15" height="3.8" fill="url(#dots)"/><text x="727" y="483" font-size="5" fill="#cca628">U</text><rect x="731.3" y="487.3" width="16.6" height="7.5" fill="none" stroke="#cca628" stroke-width="1"/><path d="M739.6 488.8 L739.6 490.1" fill="none" stroke="#cca628" stroke-width="1"/><path d="M739.6 492.1 L739.6 493.3" fill="none" stroke="#cca628" stroke-width="1"/><path d="M737.1 490.1 L742.1 490.1" fill="none" stroke="#cca628" stroke-width="1"/><path d="M737.1 492.1 L742.1 492.1" fill="none" stroke="#cca628" stroke-width="1"/><text x="736.6" y="499.8" font-size="4.5" fill="#cca628">C8</text><rect x="748.9" y="487.7" width="12.5" height="13.1" fill="none" stroke="#cca628" stroke-width="1"/><text x="763.7" y="497.8" font-size="4.5" fill="#cca628">L2</text><rect x="737.3" y="501.6" width="24.5" height="22.2" fill="none" stroke="#cca628" stroke-width="1"/><path d="M737.3 501.6 L737.3 523.8" fill="none" stroke="#56963e" stroke-width="1"/><text x="746.4" y="531" font-size="5" fill="#cca628">U4</text><rect x="700.5" y="496.8" width="6.8" height="15.2" fill="none" stroke="#cca628" stroke-width="1"/><path d="M702 504.4 L702.9 504.4" fill="none" stroke="#cca628" stroke-width="1"/><path d="M704.9 504.4 L705.8 504.4" fill="none" stroke="#cca628" stroke-width="1"/><path d="M702.9 501.9 L702.9 506.9" fill="none" stroke="#cca628" stroke-width="1"/><path d="M704.9 501.9 L704.9 506.9" fill="none" stroke="#cca628" stroke-width="1"/><rect x="708.8" y="496.8" width="15" height="12.6" fill="none" stroke="#cca628" stroke-width="1"/><rect x="723.8" y="501" width="3.7" height="9" fill="url(#dots)"/><text x="715" y="507.5" font-size="4.5" fill="#cca628">K6</text><text x="729" y="509.5" font-size="5" fill="#cca628">B</text><path d="M700.5 513.3V517.8M704.6 513.3V517.8M708.8 513.3V517.8M700.5 513.3H708.8M700.5 517.8H708.8" fill="none" stroke="#48a024" stroke-width="1.100"/><rect x="700" y="513.3" width="1.5" height="4.5" fill="#e06a20"/><text x="710.3" y="517.8" font-size="4.8" fill="#cca628">C77</text><rect x="701.3" y="519.6" width="6.4" height="7.4" fill="url(#dots)"/><text x="701.3" y="532" font-size="4.8" fill="#cca628">R54</text><path d="M698.7 516.6 L698.7 540" fill="none" stroke="#cca628" stroke-width="1"/><rect x="768.2" y="498.3" width="11.7" height="26.6" fill="none" stroke="#cca628" stroke-width="1"/><rect x="769" y="499" width="10" height="25" fill="url(#dots)"/><rect x="787.4" y="495.6" width="3.6" height="17.2" fill="none" stroke="#cca628" stroke-width="1"/><path d="M788 496V504M790.5 496V504M788 496H790.5M788 498.7H790.5M788 501.3H790.5M788 504H790.5" fill="none" stroke="#48a024" stroke-width="1.100"/><rect x="788" y="504" width="2.5" height="8" fill="url(#dots)"/><rect x="794.5" y="492.2" width="8.2" height="9.4" fill="url(#dots)"/><rect x="794.5" y="492.2" width="1.5" height="3.8" fill="#e06a20"/><rect x="816.3" y="470" width="8.2" height="17.3" fill="url(#dots)"/><path d="M816.3 488V497M819.6 488V497M816.3 488H819.6M816.3 492.5H819.6M816.3 497H819.6" fill="none" stroke="#48a024" stroke-width="1.100"/><rect x="819.6" y="490" width="1" height="7.5" fill="#e06a20"/><rect x="822.3" y="488" width="9" height="19.6" fill="url(#dots)"/><rect x="799.4" y="505.3" width="11.6" height="9.5" fill="none" stroke="#cca628" stroke-width="1"/><path d="M799.4 505.3 L799.4 514.8" fill="none" stroke="#56963e" stroke-width="1"/><text x="816.3" y="513.9" font-size="4.8" fill="#cca628">R6</text><text x="834" y="495.6" font-size="5.5" fill="#cca628" transform="rotate(-90 834 495.6)">EXT</text><rect x="759.4" y="530.4" width="9.5" height="9" fill="none" stroke="#cca628" stroke-width="1"/><text x="770.4" y="537.3" font-size="5" fill="#cca628">TP14</text><path d="M733.300 561.700V544H744.900V561.700H741.500V559H736.700V561.700z" fill="none" stroke="#cca628" stroke-width="1"/><text x="737.8" y="542" font-size="5.5" fill="#cca628" transform="rotate(-90 737.8 542)">U3</text><rect x="754.3" y="548.2" width="8.6" height="9" fill="none" stroke="#e06a20" stroke-width="1"/><path d="M755 549V556.5M758.6 549V556.5M762.3 549V556.5M755 549H762.3M755 552.8H762.3M755 556.5H762.3" fill="none" stroke="#48a024" stroke-width="1.100"/><rect x="763.3" y="549.4" width="8.7" height="7.5" fill="url(#dots)"/><path d="M752 556.5 L754 561.5" fill="none" stroke="#cca628" stroke-width="1.5"/><text x="706.2" y="548.9" font-size="4.5" fill="#cca628">R56</text><path d="M715.6 544.4V548.9M719.7 544.4V548.9M723.8 544.4V548.9M715.6 544.4H723.8M715.6 548.9H723.8" fill="none" stroke="#48a024" stroke-width="1.100"/><text x="706.2" y="555.7" font-size="4.5" fill="#cca628">R45</text><text x="706.2" y="561.7" font-size="4.5" fill="#cca628">R55</text><path d="M715.9 553V561.7M719.8 553V561.7M723.8 553V561.7M715.9 553H723.8M715.9 557.4H723.8M715.9 561.7H723.8" fill="none" stroke="#48a024" stroke-width="1.100"/><rect x="706" y="545" width="9" height="3.9" fill="#cca628" opacity="0.55"/><rect x="706" y="552" width="9" height="3.7" fill="#cca628" opacity="0.55"/><rect x="706" y="558" width="9" height="3.7" fill="#cca628" opacity="0.55"/><rect x="704.3" y="563.5" width="9" height="9.5" fill="none" stroke="#cca628" stroke-width="1"/><rect x="713.3" y="563.5" width="8.6" height="9.5" fill="none" stroke="#cca628" stroke-width="1"/><path d="M703 566.5 L703 570.5" fill="none" stroke="#cca628" stroke-width="1"/><text x="705.8" y="578" font-size="4.2" fill="#cca628">TP7 TP10</text><rect x="312.9" y="641" width="30.8" height="35.8" fill="none" stroke="#cca628" stroke-width="1"/><path d="M315 637.2H321.9L318.4 640.4z" fill="#cca628" stroke="#cca628" stroke-width="0.5"/><text x="329.5" y="685" font-size="6.5" fill="#cca628" transform="rotate(-90 329.5 685)">J41</text><rect x="310" y="655" width="3.5" height="1.5" fill="#48a024"/><rect x="310" y="659" width="3.5" height="1.5" fill="#e03020"/><rect x="310" y="663" width="3.5" height="1.5" fill="#48a024"/><rect x="310" y="667" width="3.5" height="1.5" fill="#e03020"/><rect x="310" y="671" width="3.5" height="1.5" fill="#cca628"/><rect x="310" y="675" width="3.5" height="1.5" fill="#e03020"/><path d="M346.2 627.5V631M350.4 627.5V631M354.5 627.5V631M346.2 627.5H354.5M346.2 631H354.5" fill="none" stroke="#48a024" stroke-width="1.100"/><rect x="346" y="627.5" width="1.5" height="3.5" fill="#e03020"/><text x="356.2" y="631" font-size="4.8" fill="#cca628">C37</text><rect x="347.5" y="632.4" width="16" height="8" fill="none" stroke="#cca628" stroke-width="1"/><path d="M355.5 633.9 L355.5 635.4" fill="none" stroke="#cca628" stroke-width="1"/><path d="M355.5 637.4 L355.5 638.9" fill="none" stroke="#cca628" stroke-width="1"/><path d="M353 635.4 L358 635.4" fill="none" stroke="#cca628" stroke-width="1"/><path d="M353 637.4 L358 637.4" fill="none" stroke="#cca628" stroke-width="1"/><text x="365.6" y="638.3" font-size="4.8" fill="#cca628">C48</text><rect x="347.5" y="641.4" width="21.2" height="13.9" fill="none" stroke="#cca628" stroke-width="1"/><path d="M358.1 642.9 L358.1 647.3" fill="none" stroke="#cca628" stroke-width="1"/><path d="M358.1 649.3 L358.1 653.8" fill="none" stroke="#cca628" stroke-width="1"/><path d="M355.6 647.3 L360.6 647.3" fill="none" stroke="#cca628" stroke-width="1"/><path d="M355.6 649.3 L360.6 649.3" fill="none" stroke="#cca628" stroke-width="1"/><text x="370.8" y="651.2" font-size="4.8" fill="#cca628">C38</text><text x="358.3" y="688.6" font-size="5.5" fill="#cca628">ID2</text><text x="362" y="702" font-size="5.8" fill="#cca628">(800,675)</text><path d="M385 652.5 L388 652.5" fill="none" stroke="#cca628" stroke-width="1"/><g transform="rotate(-40 408.600 709)"><rect x="396" y="705" width="25" height="8" fill="none" stroke="#c9a227"/><rect x="406.500" y="705" width="4" height="8" fill="#58a82c"/><path d="M402 705V713M415 705V713" stroke="#c9a227"/></g><text x="391" y="727" font-size="4.5" fill="#cca628" transform="rotate(-40 391 727)">TP43</text><path d="M431 586L435 583.500L439.500 586L435 588.500z" fill="none" stroke="#cca628" stroke-width="1"/><path d="M470 592.5V611.2M474.5 592.5V611.2M479 592.5V611.2M470 592.5H479M470 597.2H479M470 601.9H479M470 606.5H479M470 611.2H479" fill="none" stroke="#cca628" stroke-width="1.100"/><rect x="478.5" y="592.5" width="1.5" height="7.5" fill="#e06a20"/><rect x="470.5" y="593" width="4" height="18" fill="url(#dots)"/><rect x="479" y="604" width="18" height="36.8" fill="none" stroke="#cca628" stroke-width="1"/><path d="M488 605.5 L488 621.4" fill="none" stroke="#cca628" stroke-width="1"/><path d="M488 623.4 L488 639.3" fill="none" stroke="#cca628" stroke-width="1"/><path d="M485.5 621.4 L490.5 621.4" fill="none" stroke="#cca628" stroke-width="1"/><path d="M485.5 623.4 L490.5 623.4" fill="none" stroke="#cca628" stroke-width="1"/><text x="474" y="627.5" font-size="4.5" fill="#cca628" transform="rotate(-90 474 627.5)">C4</text><rect x="482.5" y="593.5" width="12.9" height="6.3" fill="none" stroke="#cca628" stroke-width="1"/><path d="M489 593.5 L489 599.8" fill="none" stroke="#cca628" stroke-width="1"/><text x="485" y="591.5" font-size="4.5" fill="#cca628">D61</text><rect x="498.5" y="592.5" width="9.4" height="6.2" fill="none" stroke="#cca628" stroke-width="1"/><rect x="498" y="592.5" width="1.5" height="6.2" fill="#e06a20"/><text x="499.5" y="591" font-size="4.5" fill="#cca628">R4</text><path d="M511 588.3V597.7M515.9 588.3V597.7M520.8 588.3V597.7M511 588.3H520.8M511 593H520.8M511 597.7H520.8" fill="none" stroke="#48a024" stroke-width="1.100"/><rect x="522.4" y="589.3" width="7.3" height="8.4" fill="url(#dots)"/><rect x="498.5" y="605.4" width="23.9" height="17.3" fill="none" stroke="#56963e" stroke-width="1"/><rect x="497" y="611" width="1.5" height="6" fill="#e06a20"/><path d="M503 626V629.5L500 627.8z" fill="#cca628" stroke="#cca628" stroke-width="0.5"/><text x="508.5" y="630" font-size="4.8" fill="#cca628">TJ</text><path d="M524.5 599.8V608M529.2 599.8V608M533.9 599.8V608M524.5 599.8H533.9M524.5 608H533.9" fill="none" stroke="#cca628" stroke-width="1.100"/><path d="M524.5 599.8 L533.9 599.8" fill="none" stroke="#e03020" stroke-width="1.5"/><rect x="525" y="596" width="8.5" height="3" fill="url(#dots)"/><path d="M537.4 598.3V606M542.1 598.3V606M546.8 598.3V606M551.5 598.3V606M556.2 598.3V606M537.4 598.3H556.2M537.4 606H556.2" fill="none" stroke="#48a024" stroke-width="1.100"/><rect x="537.4" y="598.3" width="18.8" height="7.7" fill="none" stroke="#cca628" stroke-width="1"/><path d="M542.2 607V612.3M546.9 607V612.3M551.6 607V612.3M542.2 607H551.6M542.2 612.3H551.6" fill="none" stroke="#cca628" stroke-width="1.100"/><path d="M542.2 607 L551.6 607" fill="none" stroke="#e06a20" stroke-width="1"/><text x="553.2" y="612" font-size="4.5" fill="#cca628">C52</text><rect x="558.2" y="597.7" width="9" height="8.3" fill="url(#dots)"/><rect x="568.2" y="597.7" width="8.3" height="8.3" fill="url(#dots)"/><rect x="568.2" y="584" width="10.4" height="5.5" fill="none" stroke="#cca628" stroke-width="1"/><rect x="568.2" y="589.5" width="10.4" height="6.1" fill="none" stroke="#cca628" stroke-width="1"/><path d="M573.4 584 L573.4 595.6" fill="none" stroke="#cca628" stroke-width="1"/><path d="M580.7 583 L580.7 741 L578 745.5 L574 746.5" fill="none" stroke="#cca628" stroke-width="1"/><rect x="581" y="604" width="27.8" height="6.8" fill="none" stroke="#cca628" stroke-width="1"/><text x="582.2" y="609.8" font-size="4.5" fill="#cca628">R12 C13 R14</text><path d="M580.7 594 L590 599.5 L594 602" fill="none" stroke="#cca628" stroke-width="1"/><path d="M592.5 602.5 L594 602 L593 600.5" fill="none" stroke="#cca628" stroke-width="1"/><rect x="550.5" y="621.2" width="28.1" height="7.1" fill="none" stroke="#cca628" stroke-width="1"/><text x="551.5" y="627.3" font-size="4.8" fill="#cca628">R7 C8 C17</text><path d="M551.6 615.4 L557.8 621.2" fill="none" stroke="#cca628" stroke-width="1"/><rect x="561.6" y="631.6" width="17" height="8.4" fill="none" stroke="#cca628" stroke-width="1"/><path d="M569 634 L569 638" fill="none" stroke="#cca628" stroke-width="1"/><path d="M571 634 L571 638" fill="none" stroke="#cca628" stroke-width="1"/><text x="551.6" y="637.2" font-size="4.5" fill="#cca628">C46</text><rect x="520.4" y="641.4" width="21.2" height="13.9" fill="none" stroke="#cca628" stroke-width="1"/><path d="M531 642.9 L531 647.3" fill="none" stroke="#cca628" stroke-width="1"/><path d="M531 649.3 L531 653.8" fill="none" stroke="#cca628" stroke-width="1"/><path d="M528.5 647.3 L533.5 647.3" fill="none" stroke="#cca628" stroke-width="1"/><path d="M528.5 649.3 L533.5 649.3" fill="none" stroke="#cca628" stroke-width="1"/><path d="M541.6 644.5V649.7L545 647.1z" fill="#cca628" stroke="#cca628" stroke-width="0.5"/><text x="509.5" y="651.2" font-size="4.5" fill="#cca628">C38</text><text x="517.2" y="639" font-size="4.5" fill="#cca628">C48</text><path d="M527 635V639M530.8 635V639M534.5 635V639M527 635H534.5M527 639H534.5" fill="none" stroke="#48a024" stroke-width="1.100"/><rect x="547.4" y="641.4" width="30.2" height="35.4" fill="none" stroke="#cca628" stroke-width="1"/><text x="573" y="686.5" font-size="6.5" fill="#cca628" transform="rotate(-90 573 686.5)">J42</text><path d="M543.5 651.5 L545.5 653 L547.4 653" fill="none" stroke="#cca628" stroke-width="1"/><path d="M543.5 660.5 L545.5 662 L547.4 662" fill="none" stroke="#cca628" stroke-width="1"/><path d="M543.5 669.5 L545.5 671 L547.4 671" fill="none" stroke="#cca628" stroke-width="1"/><rect x="589.4" y="643.5" width="15.2" height="32.2" fill="none" stroke="#cca628" stroke-width="1"/><path d="M586 648.7V653.9L589.4 651.3z" fill="#cca628" stroke="#cca628" stroke-width="0.5"/><text x="613" y="661.5" font-size="6.5" fill="#cca628" transform="rotate(-90 613 661.5)">J43</text><g transform="rotate(45 548.500 697.600)"><rect x="536" y="693.600" width="25" height="8" fill="none" stroke="#c9a227"/><rect x="546.500" y="693.600" width="4" height="8" fill="#58a82c"/><path d="M542.500 693.600V701.600M554.500 693.600V701.600" stroke="#c9a227"/></g><text x="531" y="682" font-size="4.5" fill="#cca628" transform="rotate(45 531 682)">TP44</text><text x="605" y="688" font-size="5" fill="#cca628" transform="rotate(-70 605 688)">J6</text><text x="614" y="688" font-size="5" fill="#cca628" transform="rotate(-70 614 688)">J8</text><text x="623" y="688" font-size="5" fill="#cca628" transform="rotate(-70 623 688)">J5</text><rect x="602" y="692.4" width="25.5" height="3.1" fill="none" stroke="#cca628" stroke-width="1"/><path d="M610.5 692.4 L610.5 695.5" fill="none" stroke="#cca628" stroke-width="1"/><path d="M619 692.4 L619 695.5" fill="none" stroke="#cca628" stroke-width="1"/><path d="M605.3 745.5 L605.3 702.4 L622.3 702.4 L622.3 745.5" fill="none" stroke="#cca628" stroke-width="1"/><path d="M606 702.4 L621.5 702.4" fill="none" stroke="#56963e" stroke-width="1"/><path d="M610.800 746A3.600 3.600 0 0 0 618 746" fill="none" stroke="#56963e" stroke-width="1"/><path d="M605.3 745.5 L605.3 749" fill="none" stroke="#56963e" stroke-width="1"/><path d="M622.3 745.5 L622.3 749" fill="none" stroke="#56963e" stroke-width="1"/><text x="599" y="717.4" font-size="4.8" fill="#cca628" transform="rotate(-90 599 717.4)">LED4</text><rect x="600.8" y="722" width="1.5" height="1.5" fill="#cca628"/><path d="M625.5 698.6 L625.5 738" fill="none" stroke="#e06a20" stroke-width="1"/><path d="M627.5 698.6 L627.5 738" fill="none" stroke="#56963e" stroke-width="1"/><path d="M627.5 698.6V717M633.8 698.6V717M627.5 698.6H633.8M627.5 703.2H633.8M627.5 707.8H633.8M627.5 712.4H633.8M627.5 717H633.8" fill="none" stroke="#cca628" stroke-width="1.100"/><rect x="626" y="726.5" width="3" height="3" fill="#48a024"/><rect x="629.5" y="727" width="4.3" height="11" fill="url(#dots)"/><path d="M637.3 578 L637.3 610.8 L685.2 610.8 L685.2 578" fill="none" stroke="#cca628" stroke-width="1"/><rect x="644.6" y="610.8" width="17" height="43.7" fill="none" stroke="#cca628" stroke-width="1"/><path d="M646.200 654.500L649 674.700H656.600L659.600 654.500" fill="none" stroke="#cca628" stroke-width="1"/><path d="M688.3 753.8 L688.3 660.1 L732 660.1 L732 753.8" fill="none" stroke="#cca628" stroke-width="1"/><path d="M691.4 753.8 L691.4 660.1" fill="none" stroke="#cca628" stroke-width="1"/><path d="M727.8 753.8 L727.8 660.1" fill="none" stroke="#cca628" stroke-width="1"/><path d="M688.3 674.7 L732 674.7" fill="none" stroke="#cca628" stroke-width="1"/><path d="M689 674.700H676L672.700 678V690L676 693.400H689" fill="none" stroke="#56963e" stroke-width="1"/><path d="M732 674.700H744.300L747.600 678V690L744.300 693.400H732" fill="none" stroke="#56963e" stroke-width="1"/><circle cx="681.6" cy="684.7" r="6" fill="none" stroke="#56963e" stroke-width="1"/><circle cx="681.6" cy="684.7" r="3.6" fill="none" stroke="#56963e" stroke-width="1"/><circle cx="739.9" cy="684.7" r="6" fill="none" stroke="#56963e" stroke-width="1"/><circle cx="739.9" cy="684.7" r="3.6" fill="none" stroke="#56963e" stroke-width="1"/><rect x="672.7" y="697.6" width="74.9" height="14.6" fill="none" stroke="#cca628" stroke-width="1"/><path d="M672.7 702.8 L747.6 702.8" fill="none" stroke="#cca628" stroke-width="1"/><path d="M675.5 702.8 L675.5 712.2" fill="none" stroke="#cca628" stroke-width="1"/><path d="M678.5 702.8 L678.5 712.2" fill="none" stroke="#cca628" stroke-width="1"/><path d="M683 702.8 L683 712.2" fill="none" stroke="#cca628" stroke-width="1"/><path d="M737 702.8 L737 712.2" fill="none" stroke="#cca628" stroke-width="1"/><path d="M741.5 702.8 L741.5 712.2" fill="none" stroke="#cca628" stroke-width="1"/><path d="M744.5 702.8 L744.5 712.2" fill="none" stroke="#cca628" stroke-width="1"/><rect x="701.8" y="688.2" width="16.6" height="38.5" fill="none" stroke="#cca628" stroke-width="1"/><path d="M704 688.2 L704 726.7" fill="none" stroke="#cca628" stroke-width="1"/><path d="M716.2 688.2 L716.2 726.7" fill="none" stroke="#cca628" stroke-width="1"/><path d="M707 753.800V731A3.100 5 0 0 1 713.200 731V753.800" fill="none" stroke="#cca628" stroke-width="1"/><path d="M688.3 746 L688.3 753.8" fill="none" stroke="#56963e" stroke-width="1"/><path d="M691.4 746 L691.4 753.8" fill="none" stroke="#56963e" stroke-width="1"/><path d="M707 746 L707 753.8" fill="none" stroke="#56963e" stroke-width="1"/><path d="M713.2 746 L713.2 753.8" fill="none" stroke="#56963e" stroke-width="1"/><path d="M727.8 746 L727.8 753.8" fill="none" stroke="#56963e" stroke-width="1"/><path d="M732 746 L732 753.8" fill="none" stroke="#56963e" stroke-width="1"/><path d="M688.3 753.8 L707 753.8" fill="none" stroke="#56963e" stroke-width="1"/><path d="M713.2 753.8 L732 753.8" fill="none" stroke="#56963e" stroke-width="1"/><path d="M756.5 725 L756.5 640.4 L816.9 640.4 L816.9 725" fill="none" stroke="#cca628" stroke-width="1"/><path d="M756.5 725 L756.5 753.8 L816.9 753.8 L816.9 725" fill="none" stroke="#56963e" stroke-width="1"/><text x="757.5" y="649" font-size="4.8" fill="#cca628">L8</text><text x="757.5" y="659" font-size="4.8" fill="#cca628">L2</text><text x="763" y="667.5" font-size="4.8" fill="#cca628">4</text><text x="811.5" y="649" font-size="4.8" fill="#cca628">L8</text><text x="811.5" y="659" font-size="4.8" fill="#cca628">7</text><text x="808.5" y="667.5" font-size="4.8" fill="#cca628">3</text><text x="741.3" y="644.5" font-size="5.5" fill="#cca628" transform="rotate(20 741.3 644.5)">J7</text><rect x="755.3" y="615.3" width="3.5" height="8.4" fill="url(#dots)"/><rect x="760.2" y="615.3" width="3.5" height="8.4" fill="url(#dots)"/><rect x="765.1" y="615.3" width="3.5" height="8.4" fill="url(#dots)"/><rect x="770" y="615.3" width="3.5" height="8.4" fill="url(#dots)"/><rect x="774.9" y="615.3" width="3.5" height="8.4" fill="url(#dots)"/><rect x="779.8" y="615.3" width="3.5" height="8.4" fill="url(#dots)"/><rect x="784.7" y="615.3" width="3.5" height="8.4" fill="url(#dots)"/><rect x="789.6" y="615.3" width="3.5" height="8.4" fill="url(#dots)"/><rect x="794.5" y="615.3" width="3.5" height="8.4" fill="url(#dots)"/><rect x="799.4" y="615.3" width="3.5" height="8.4" fill="url(#dots)"/><rect x="804.3" y="614" width="3.5" height="9.7" fill="url(#dots)"/><rect x="809.2" y="614" width="3.5" height="9.7" fill="url(#dots)"/><rect x="814.1" y="615.3" width="3.5" height="8.4" fill="url(#dots)"/><rect x="819" y="615.3" width="3.5" height="8.4" fill="url(#dots)"/><path d="M755.3 624.3V633.7M760.2 624.3V633.7M765 624.3V633.7M769.9 624.3V633.7M774.8 624.3V633.7M779.7 624.3V633.7M784.5 624.3V633.7M789.4 624.3V633.7M794.3 624.3V633.7M799.1 624.3V633.7M804 624.3V633.7M808.9 624.3V633.7M813.8 624.3V633.7M818.6 624.3V633.7M823.5 624.3V633.7M755.3 624.3H823.5M755.3 629H823.5M755.3 633.7H823.5" fill="none" stroke="#48a024" stroke-width="1.100"/><path d="M765 624.3 L765 633.7" fill="none" stroke="#e06a20" stroke-width="1.3"/><path d="M770 624.3 L770 633.7" fill="none" stroke="#e06a20" stroke-width="1.3"/><path d="M784 624.3 L784 633.7" fill="none" stroke="#e06a20" stroke-width="1.3"/><path d="M794 624.3 L794 633.7" fill="none" stroke="#e06a20" stroke-width="1.3"/><path d="M806 624.3 L806 633.7" fill="none" stroke="#e06a20" stroke-width="1.3"/><path d="M811 624.3 L811 633.7" fill="none" stroke="#e06a20" stroke-width="1.3"/><path d="M760 624.3 L760 633.7" fill="none" stroke="#cca628" stroke-width="1"/><path d="M775 624.3 L775 633.7" fill="none" stroke="#cca628" stroke-width="1"/><path d="M789 624.3 L789 633.7" fill="none" stroke="#cca628" stroke-width="1"/><path d="M800 624.3 L800 633.7" fill="none" stroke="#cca628" stroke-width="1"/><path d="M818 624.3 L818 633.7" fill="none" stroke="#cca628" stroke-width="1"/><rect x="856.5" y="663" width="19.5" height="19.4" fill="none" stroke="#cca628" stroke-width="1"/><text x="864" y="661.5" font-size="4.5" fill="#cca628">J9</text><rect x="968.2" y="663" width="20.1" height="19.4" fill="none" stroke="#cca628" stroke-width="1"/><text x="976" y="661.5" font-size="4.5" fill="#cca628">J8</text><text x="898.6" y="680.8" font-size="5.5" fill="#cca628">ID3</text><text x="884.7" y="707.5" font-size="5.8" fill="#cca628">(8825,875)</text><path d="M997 745.5 L1000 745.5 L1003.6 741.5 L1003.6 738.5" fill="none" stroke="#ffffff" stroke-width="1"/><path d="M999 741 L1002 744" fill="none" stroke="#ffffff" stroke-width="1"/><g stroke="#fff" stroke-width="1" fill="none"><circle cx="309.400" cy="745.500" r="7.500"/><path d="M300 745.500H319M309.400 736V755M302.800 738.800L316 752.200M316 738.800L302.800 752.200"/><path d="M309.400 745.500L314 734.500M309.400 745.500L320.500 741" stroke-width="0.700"/></g><path d="M424.500 583A86 86 0 1 0 554.700 684.400" fill="none" stroke="#cca628" stroke-width="3.8"/><path d="M462 738.500H602C626 737 650 711 653.500 675" fill="none" stroke="#cca628" stroke-width="3.8"/><path d="M466 737.500H500" fill="none" stroke="#cca628" stroke-width="4.5"/><path d="M673 583A80.300 80.300 0 0 1 709 650V686" fill="none" stroke="#cca628" stroke-width="3.8"/><path d="M707.400 684H710.600L712.500 688.500H709z" fill="#cca628" stroke="#cca628" stroke-width="0.5"/><rect x="834.3" y="254.5" width="14.3" height="35.9" fill="none" stroke="#ffffff" stroke-width="1.3"/><path d="M697.5 233.3 L834.3 254.5" fill="none" stroke="#ffffff" stroke-width="1"/><path d="M697.5 183.2 L848.6 254.5" fill="none" stroke="#ffffff" stroke-width="1"/><path d="M697.5 347.4 L834.3 290.4" fill="none" stroke="#ffffff" stroke-width="1"/><path d="M697.5 490.3 L848.6 290.4" fill="none" stroke="#ffffff" stroke-width="1"/></svg><div class="a" style="left:218px;top:135px;width:480px;height:448px;background:#ece9e0;border:1px solid;border-color:#d4d0c8 #404040 #404040 #d4d0c8;box-shadow:inset 1px 1px 0 #fff,inset -1px -1px 0 #808080"></div><div class="a" style="left:222px;top:139px;width:472px;height:18px;background:linear-gradient(90deg,#0a246a 0%,#3a5aa0 40%,#a6caf0 100%)"></div><svg class="a" style="left:224px;top:141px" width="16" height="14" viewBox="0 0 16 14"><rect x="0" y="0" width="15" height="13" fill="#fff" stroke="#404040" stroke-width="1"/><rect x="1" y="1" width="13" height="2" fill="#000080"/><path d="M4 5 L11 11 M11 5 L4 11" stroke="#c8c800" stroke-width="2"/></svg><div class="a sans" style="left:241px;top:140px;font-weight:bold;font-size:11px;line-height:16px;color:#fff;white-space:pre;letter-spacing:0.200px" id="pvt">Popview - 1</div><div class="a" style="left:676px;top:141px;width:16px;height:14px;background:#d4d0c8;border:1px solid;border-color:#fff #404040 #404040 #fff;box-shadow:inset -1px -1px 0 #808080"><svg width="14" height="12" style="position:absolute;left:0;top:0"><path d="M3.500 2.500l6.500 6.500M10 2.500l-6.500 6.500" stroke="#000" stroke-width="1.600"/></svg></div><div class="a" style="left:222px;top:158px;width:472px;height:392px;background:#000"></div><div class="a" style="left:222px;top:158px;width:436px;height:3px;background:#3a8270"></div><div class="a" style="left:222px;top:158px;width:3px;height:392px;background:#3a8270"></div><div class="a" style="left:654px;top:161px;width:3px;height:389px;background:#b4ecd8"></div><div class="a" style="left:225px;top:548px;width:432px;height:3px;background:#b4ecd8"></div><div class="a" style="left:659px;top:160px;width:34px;height:390px;background:#52ceae"></div><svg class="a" style="left:657px;top:158px" width="37" height="37" viewBox="-2 -2 37 37" shape-rendering="crispEdges"><rect x="-2" y="-2" width="37" height="37" fill="#000"/><rect x="0" y="0" width="33" height="33" fill="#52ceae"/><rect x="2" y="2" width="29" height="29" fill="#a0dcdc"/><path d="M2 2H31L29 4H4V29L2 31z" fill="#d8f6f6"/><path d="M31 31H2L4 29H29V4L31 2z" fill="#5c9c98"/><rect x="6.500" y="6.500" width="20" height="20" fill="none" stroke="#000" stroke-width="1"/><g transform="translate(7,7)"><rect x="3" y="6.500" width="9" height="9" fill="none" stroke="#000" stroke-width="2.200"/><rect x="13.500" y="2.500" width="4" height="4" fill="none" stroke="#000" stroke-width="1"/><path d="M12 11H15.500V6.500" fill="none" stroke="#000" stroke-width="1"/><path d="M10 11H5.500M7.500 9L5.500 11L7.500 13" fill="none" stroke="#000" stroke-width="1"/></g></svg><svg class="a" style="left:657px;top:193px" width="37" height="37" viewBox="-2 -2 37 37" shape-rendering="crispEdges"><rect x="-2" y="-2" width="37" height="37" fill="#000"/><rect x="0" y="0" width="33" height="33" fill="#52ceae"/><rect x="2" y="2" width="29" height="29" fill="#a0dcdc"/><path d="M2 2H31L29 4H4V29L2 31z" fill="#d8f6f6"/><path d="M31 31H2L4 29H29V4L31 2z" fill="#5c9c98"/><rect x="6.500" y="6.500" width="20" height="20" fill="none" stroke="#000" stroke-width="1"/><g transform="translate(7,7)"><path d="M3 8V16H16V8M5.500 9.500V13.500H13.500V9.500" fill="none" stroke="#000" stroke-width="1.300"/><path d="M9.500 1.500L14 6H12V11H7V6H5z" fill="#000"/></g></svg><svg class="a" style="left:657px;top:228px" width="37" height="37" viewBox="-2 -2 37 37" shape-rendering="crispEdges"><rect x="-2" y="-2" width="37" height="37" fill="#000"/><rect x="0" y="0" width="33" height="33" fill="#52ceae"/><rect x="2" y="2" width="29" height="29" fill="#a0dcdc"/><path d="M2 2H31L29 4H4V29L2 31z" fill="#d8f6f6"/><path d="M31 31H2L4 29H29V4L31 2z" fill="#5c9c98"/><rect x="6.500" y="6.500" width="20" height="20" fill="none" stroke="#000" stroke-width="1"/><g transform="translate(7,7)"><path d="M3 11V3H16V11M5.500 9.500V5.500H13.500V9.500" fill="none" stroke="#000" stroke-width="1.300"/><path d="M9.500 17.500L14 13H12V8H7V13H5z" fill="#000"/></g></svg><svg class="a" style="left:657px;top:263px" width="37" height="37" viewBox="-2 -2 37 37" shape-rendering="crispEdges"><rect x="-2" y="-2" width="37" height="37" fill="#000"/><rect x="0" y="0" width="33" height="33" fill="#52ceae"/><rect x="2" y="2" width="29" height="29" fill="#a0dcdc"/><path d="M2 2H31L29 4H4V29L2 31z" fill="#d8f6f6"/><path d="M31 31H2L4 29H29V4L31 2z" fill="#5c9c98"/><rect x="6.500" y="6.500" width="20" height="20" fill="none" stroke="#000" stroke-width="1"/><g transform="translate(7,7)"><path d="M8 3H16V16H8M9.500 5.500H13.500V13.500H9.500" fill="none" stroke="#000" stroke-width="1.300"/><path d="M1.500 9.500L6 5V7H11V12H6V14z" fill="#000"/></g></svg><svg class="a" style="left:657px;top:298px" width="37" height="37" viewBox="-2 -2 37 37" shape-rendering="crispEdges"><rect x="-2" y="-2" width="37" height="37" fill="#000"/><rect x="0" y="0" width="33" height="33" fill="#52ceae"/><rect x="2" y="2" width="29" height="29" fill="#a0dcdc"/><path d="M2 2H31L29 4H4V29L2 31z" fill="#d8f6f6"/><path d="M31 31H2L4 29H29V4L31 2z" fill="#5c9c98"/><rect x="6.500" y="6.500" width="20" height="20" fill="none" stroke="#000" stroke-width="1"/><g transform="translate(7,7)"><path d="M11 3H3V16H11M9.500 5.500H5.500V13.500H9.500" fill="none" stroke="#000" stroke-width="1.300"/><path d="M17.500 9.500L13 5V7H8V12H13V14z" fill="#000"/></g></svg><svg class="a" style="left:657px;top:333px" width="37" height="37" viewBox="-2 -2 37 37" shape-rendering="crispEdges"><rect x="-2" y="-2" width="37" height="37" fill="#000"/><rect x="0" y="0" width="33" height="33" fill="#52ceae"/><rect x="2" y="2" width="29" height="29" fill="#a0dcdc"/><path d="M2 2H31L29 4H4V29L2 31z" fill="#d8f6f6"/><path d="M31 31H2L4 29H29V4L31 2z" fill="#5c9c98"/><rect x="6.500" y="6.500" width="20" height="20" fill="none" stroke="#000" stroke-width="1"/><g transform="translate(7,7)"><rect x="7" y="7" width="5" height="5" fill="none" stroke="#000" stroke-width="1.400"/><path d="M9.500 6L5.500 1H13.500zM9.500 13L5.500 18H13.500zM6 9.500L1 5.500V13.500zM13 9.500L18 5.500V13.500z" fill="#000"/></g></svg><svg class="a" style="left:657px;top:368px" width="37" height="37" viewBox="-2 -2 37 37" shape-rendering="crispEdges"><rect x="-2" y="-2" width="37" height="37" fill="#000"/><rect x="0" y="0" width="33" height="33" fill="#52ceae"/><rect x="2" y="2" width="29" height="29" fill="#a0dcdc"/><path d="M2 2H31L29 4H4V29L2 31z" fill="#d8f6f6"/><path d="M31 31H2L4 29H29V4L31 2z" fill="#5c9c98"/><rect x="6.500" y="6.500" width="20" height="20" fill="none" stroke="#000" stroke-width="1"/><g transform="translate(7,7)"><rect x="7.500" y="7.500" width="4" height="4" fill="none" stroke="#000" stroke-width="1.200"/><path d="M9.500 1L13 5H6zM9.500 18L13 14H6zM1 9.500L5 6V13zM18 9.500L14 6V13z" fill="#000"/><path d="M9.500 5V7M9.500 12V14M5 9.500H7M12 9.500H14" stroke="#000" stroke-width="1.200"/></g></svg><div class="a" style="left:657px;top:405px;width:2px;height:145px;background:#000"></div><div class="a" style="left:222px;top:551px;width:472px;height:29px;background:#000"></div><div class="a" style="left:223px;top:552px;width:470px;height:27px;background:#52ceae"></div><div class="a" style="left:225px;top:554px;width:466px;height:23px;background:#a0dcdc;border:2px solid;border-color:#c8fff8 #3a8270 #3a8270 #c8fff8"></div><div class="a mono" style="left:435px;top:558px;font-size:13.500px;line-height:15px;letter-spacing:0.900px" id="close">Close</div><svg class="a" style="left:225px;top:161px" width="429" height="387" viewBox="225 161 429 387" shape-rendering="crispEdges"><rect x="306.5" y="162" width="5.2" height="158" fill="#c9a227"/><rect x="225.6" y="315" width="86.1" height="5" fill="#c9a227"/><rect x="246.5" y="199.4" width="60" height="4.6" fill="#c9a227"/><rect x="242" y="185" width="4.8" height="32.5" fill="#c9a227" rx="2.2"/><rect x="564" y="175" width="32.5" height="5" fill="#c9a227" rx="2.2"/><rect x="625.3" y="162" width="4.7" height="100" fill="#4c9c24"/><rect x="625.3" y="261" width="4.7" height="19" fill="#c9a227"/><rect x="625.3" y="275" width="19.7" height="5" fill="#c9a227"/><rect x="644.7" y="275" width="9.3" height="5" fill="#4c9c24"/><rect x="392" y="252" width="11" height="4" fill="#c9a227"/><rect x="393" y="251.3" width="9" height="1.7" fill="#4c9c24"/><rect x="392" y="258" width="11" height="4" fill="#4c9c24"/><rect x="391" y="257.2" width="13" height="1.1" fill="#d04020"/><rect x="650.3" y="313" width="2.7" height="14" fill="#c9a227" rx="1"/><path d="M654.500 365.800A22 22 0 0 0 654.500 404.200" fill="none" stroke="#c9a227" stroke-width="3.200"/><path d="M654.500 450.300A22 22 0 0 0 654.500 488" fill="none" stroke="#c9a227" stroke-width="3.200"/><path d="M404.500 450.700V448.500Q404.500 446.500 407 446.500H415.500Q418.300 446.500 418.300 448.500V450.700z" fill="#4c9c24"/><rect x="404.4" y="453.5" width="13.9" height="4.5" fill="#4c9c24" rx="1"/><path d="M605 548V546.500Q605 544.400 608 544.400H613Q616 544.400 616 546.500V548z" fill="#4c9c24"/></svg></body></html>
